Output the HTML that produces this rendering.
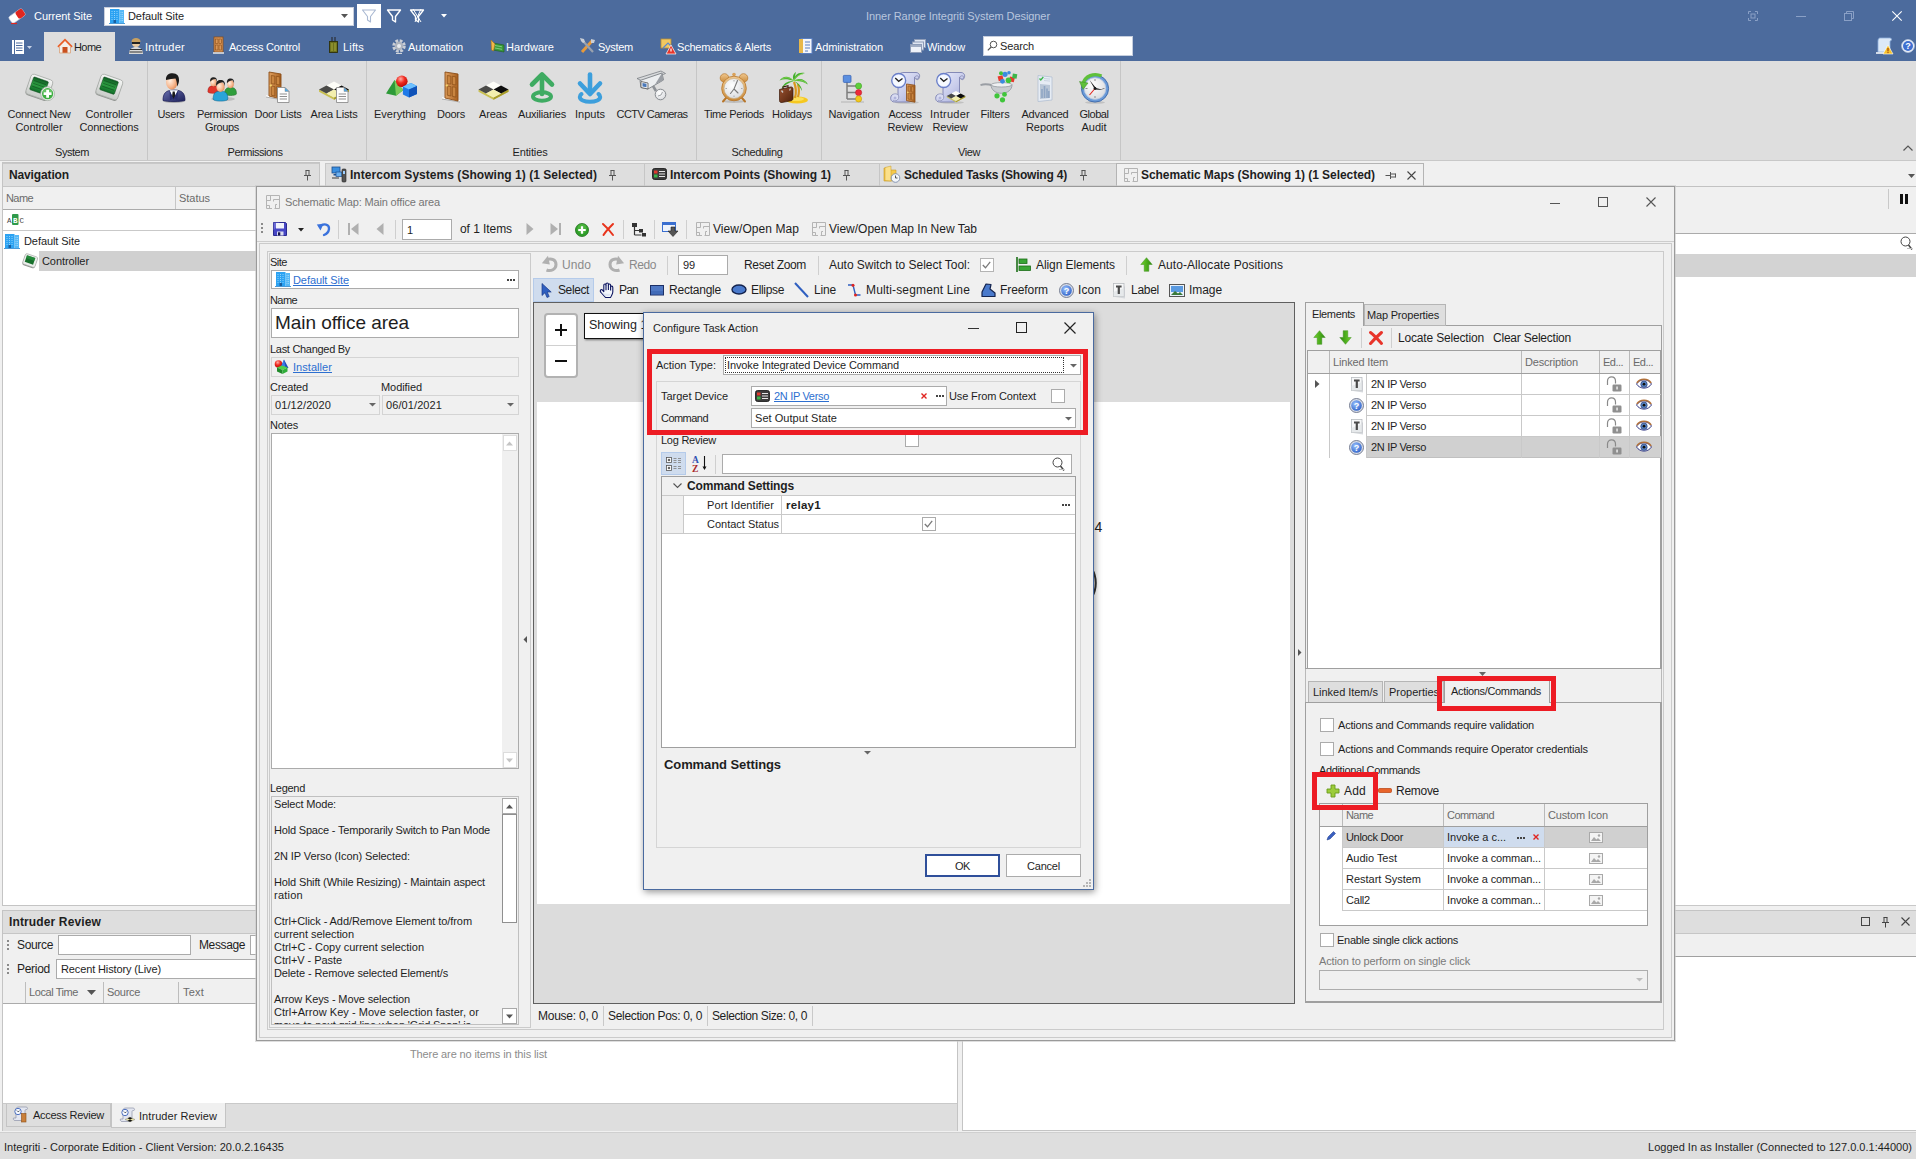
<!DOCTYPE html>
<html lang="en"><head><meta charset="utf-8"><title>Inner Range Integriti System Designer</title>
<style>
html,body{margin:0;padding:0;background:#f0f0f0;}
#app{position:relative;width:1916px;height:1159px;overflow:hidden;background:#f0f0f0;font-family:"Liberation Sans",sans-serif;font-size:11px;color:#1e1e1e;}
#app div,#app svg{position:absolute;box-sizing:border-box;}
#app svg{overflow:visible;}
.t,.s,.b,.bs,.h,.big{white-space:pre;line-height:14px;height:14px;}
.t{font-size:11px;}
.s{font-size:12px;line-height:17px;height:17px;}
.b{font-size:12px;font-weight:bold;}
.bs{font-size:13px;font-weight:bold;line-height:16px;height:16px;}
.h{font-size:11px;color:#6b6b6b;}
.big{font-size:19px;line-height:24px;height:24px;}
.lnk span{color:#2d6fd0;text-decoration:underline;}
.w{color:#fff;}

</style></head>
<body>
<div id="app">
<svg width="0" height="0" style="left:0;top:0"><defs>
<linearGradient id="gGreen" x1="0" y1="0" x2="0" y2="1"><stop offset="0" stop-color="#0e5a22"/><stop offset=".5" stop-color="#2fa044"/><stop offset="1" stop-color="#0e6a26"/></linearGradient>
<linearGradient id="gDoor" x1="0" y1="0" x2="1" y2="0"><stop offset="0" stop-color="#dfa060"/><stop offset="1" stop-color="#a8601f"/></linearGradient>
<linearGradient id="gSuit" x1="0" y1="0" x2="1" y2="1"><stop offset="0" stop-color="#6a70b0"/><stop offset="1" stop-color="#1d2059"/></linearGradient>
<radialGradient id="gSkin" cx="0.35" cy="0.4" r="0.75"><stop offset="0" stop-color="#fff0e2"/><stop offset=".6" stop-color="#f6b58c"/><stop offset="1" stop-color="#d9804a"/></radialGradient>
<radialGradient id="gBlueBall" cx="0.4" cy="0.35" r="0.7"><stop offset="0" stop-color="#9cc4ff"/><stop offset="1" stop-color="#2f62c8"/></radialGradient>
<radialGradient id="gRedBall" cx="0.4" cy="0.3" r="0.7"><stop offset="0" stop-color="#ffb0a8"/><stop offset=".5" stop-color="#f02a20"/><stop offset="1" stop-color="#b80c08"/></radialGradient>
<linearGradient id="gArrowG" x1="0" y1="0" x2="1" y2="0"><stop offset="0" stop-color="#6fd22a"/><stop offset="1" stop-color="#2c8a10"/></linearGradient>
<linearGradient id="gDev" x1="0" y1="0" x2="0" y2="1"><stop offset="0" stop-color="#f4f5f4"/><stop offset="1" stop-color="#c9ccc9"/></linearGradient>
<linearGradient id="gScroll" x1="0" y1="0" x2="1" y2="1"><stop offset="0" stop-color="#eef0fb"/><stop offset=".55" stop-color="#c9cdec"/><stop offset="1" stop-color="#a4a9d8"/></linearGradient>
<linearGradient id="gBell" x1="0" y1="0" x2="0" y2="1"><stop offset="0" stop-color="#f0c890"/><stop offset="1" stop-color="#c98a3a"/></linearGradient>
<radialGradient id="gFace" cx="0.4" cy="0.35" r="0.8"><stop offset="0" stop-color="#ffffff"/><stop offset="1" stop-color="#d4d6da"/></radialGradient>
<linearGradient id="gCase" x1="0" y1="0" x2="1" y2="1"><stop offset="0" stop-color="#9a5230"/><stop offset="1" stop-color="#4f210c"/></linearGradient>
</defs></svg>
<div style="left:0px;top:0px;width:1916px;height:61px;background:#4c6b9d;"></div>
<svg style="left:8px;top:7px;" width="18" height="18" viewBox="0 0 18 18"><g transform="rotate(-35 9 9)"><rect x="1" y="5" width="16" height="8" rx="2" fill="#fff" stroke="#c9cfe0" stroke-width=".6"/><rect x="9" y="5" width="8" height="8" rx="2" fill="#e0261f"/></g><path d="M3 16.500h6" stroke="#e0261f" stroke-width="1.200"/></svg>
<div class="t w" style="left:34px;top:9px;letter-spacing:-0.058px;"><span>Current Site</span></div>
<div style="left:104px;top:7px;width:250px;height:19px;background:#fff;border:1px solid #c9cfdc;"></div>
<svg style="left:109px;top:8px;" width="16" height="16" viewBox="0 0 16 16"><rect x="1" y="1" width="9.500" height="14" fill="#2ba2f2"/><rect x="10.500" y="2" width="4.500" height="13" fill="#55b8f6"/><path d="M3 3v9M5.500 3v9M8 3v9M12 4v10M13.500 4v10" stroke="#8fd2fb" stroke-width="1" stroke-dasharray="1 1"/><rect x="4.500" y="12" width="2.500" height="3" fill="#1a5fa0"/><path d="M0 15.500h16" stroke="#4a9ad8" stroke-width="1"/></svg>
<div class="t" style="left:128px;top:9px;letter-spacing:-0.073px;"><span>Default Site</span></div>
<svg style="left:341px;top:14px;" width="8" height="5" viewBox="0 0 8 5"><path d="M0 0h7L3.500 4z" fill="#555"/></svg>
<div style="left:357px;top:4px;width:24px;height:24px;background:#fff;"></div>
<svg style="left:361px;top:8px;" width="16" height="16" viewBox="0 0 16 16"><path d="M1.500 2h13L9.500 8.500V14l-3-2V8.500z" fill="none" stroke="#a9b8d2" stroke-width="1.1" stroke-linejoin="round"/></svg>
<svg style="left:386px;top:8px;" width="16" height="16" viewBox="0 0 16 16"><path d="M1.500 2h13L9.500 8.500V14l-3-2V8.500z" fill="none" stroke="#fff" stroke-width="1.4" stroke-linejoin="round"/></svg>
<svg style="left:409px;top:8px;" width="16" height="16" viewBox="0 0 16 16"><path d="M1.500 2h13L9.500 8.500V14l-3-2V8.500z" fill="none" stroke="#fff" stroke-width="1.3" stroke-linejoin="round"/><path d="M4 1l8 13M12 1L6 14" stroke="#fff" stroke-width="1"/></svg>
<svg style="left:441px;top:14px;" width="8" height="5" viewBox="0 0 8 5"><path d="M0 0h6L3 3.500z" fill="#fff"/></svg>
<div class="t" style="left:866px;top:9px;color:#b9c6de;letter-spacing:-0.067px;"><span>Inner Range Integriti System Designer</span></div>
<svg style="left:1748px;top:11px;" width="10" height="10" viewBox="0 0 10 10"><path d="M.5 3V.5H3M7 .5h2.500V3M9.500 7v2.500H7M3 9.500H.5V7" fill="none" stroke="#8aa0c6" stroke-width="1"/><rect x="3" y="3" width="4" height="4" fill="none" stroke="#8aa0c6" stroke-width="1"/></svg>
<div style="left:1796px;top:16px;width:10px;height:1px;background:#8aa0c6;"></div>
<svg style="left:1844px;top:11px;" width="10" height="10" viewBox="0 0 10 10"><rect x=".5" y="2.500" width="7" height="7" fill="none" stroke="#8aa0c6" stroke-width="1"/><path d="M2.500 2.500v-2h7v7h-2" fill="none" stroke="#8aa0c6" stroke-width="1"/></svg>
<svg style="left:1892px;top:11px;" width="10" height="10" viewBox="0 0 10 10"><path d="M.3.300l9.400 9.400M9.700.3L.3 9.700" stroke="#fff" stroke-width="1.100"/></svg>
<svg style="left:12px;top:40px;" width="14" height="14" viewBox="0 0 14 14"><rect x="0" y="0" width="12" height="14" fill="#fff"/><path d="M4 3h6.500M4 5.500h6.500M4 8h6.500M4 10.500h6.500" stroke="#4c6b9d" stroke-width="1"/><path d="M2.500 0v14" stroke="#4c6b9d" stroke-width="1"/></svg>
<svg style="left:27px;top:46px;" width="6" height="4" viewBox="0 0 6 4"><path d="M0 0h5L2.500 3z" fill="#c9d3e6"/></svg>
<div style="left:44px;top:32px;width:71px;height:29px;background:#dedede;"></div>
<svg style="left:57px;top:38px;" width="16" height="16" viewBox="0 0 16 16"><path d="M8 1L0 8.500h2.500V15h11V8.500H16z" fill="#f4f0ea" stroke="#e2622a" stroke-width="0"/><path d="M8 .5L.3 8.200l1.200 1.200L8 3l6.500 6.400 1.200-1.200z" fill="#e8602a"/><rect x="5.500" y="9" width="5" height="6" fill="#c9501f"/><path d="M2.500 9v6h11V9" fill="none" stroke="#d9a27a" stroke-width=".8"/></svg>
<div class="t" style="left:74px;top:40px;letter-spacing:-0.586px;"><span>Home</span></div>
<div class="t w" style="left:145px;top:40px;letter-spacing:0.260px;"><span>Intruder</span></div>
<div class="t w" style="left:229px;top:40px;letter-spacing:-0.213px;"><span>Access Control</span></div>
<div class="t w" style="left:343px;top:40px;letter-spacing:0.163px;"><span>Lifts</span></div>
<div class="t w" style="left:408px;top:40px;letter-spacing:-0.066px;"><span>Automation</span></div>
<div class="t w" style="left:506px;top:40px;letter-spacing:0.039px;"><span>Hardware</span></div>
<div class="t w" style="left:598px;top:40px;letter-spacing:-0.281px;"><span>System</span></div>
<div class="t w" style="left:677px;top:40px;letter-spacing:-0.201px;"><span>Schematics &amp; Alerts</span></div>
<div class="t w" style="left:815px;top:40px;letter-spacing:-0.122px;"><span>Administration</span></div>
<div class="t w" style="left:927px;top:40px;letter-spacing:-0.188px;"><span>Window</span></div>
<svg style="left:129px;top:38px;" width="14" height="16" viewBox="0 0 14 16"><circle cx="7" cy="5" r="4" fill="#e8c9a0"/><path d="M2.500 4c0-3 2-4 4.500-4s4.500 1 4.500 4z" fill="#c8a060"/><rect x="3" y="4" width="8" height="2" fill="#222"/><path d="M0 16c0-5 3-7 7-7s7 2 7 7z" fill="#d8d8d8"/><path d="M1 11.500h12M.5 14h13" stroke="#333" stroke-width="1.200"/></svg>
<svg style="left:213px;top:37px;" width="11" height="17" viewBox="0 0 11 17"><rect x="1" y="0" width="9" height="15" fill="#d9975a" stroke="#8a4d17" stroke-width=".8"/><rect x="2.500" y="2" width="2.500" height="4.500" fill="none" stroke="#8a4d17" stroke-width=".6"/><rect x="6" y="2" width="2.500" height="4.500" fill="none" stroke="#8a4d17" stroke-width=".6"/><rect x="2.500" y="8" width="2.500" height="5" fill="none" stroke="#8a4d17" stroke-width=".6"/><rect x="6" y="8" width="2.500" height="5" fill="none" stroke="#8a4d17" stroke-width=".6"/><path d="M0 16h11" stroke="#e8e8e8" stroke-width="1.500"/></svg>
<svg style="left:328px;top:37px;" width="11" height="17" viewBox="0 0 11 17"><path d="M4 0v4M7 0v4" stroke="#222" stroke-width="1"/><rect x="1.500" y="4.500" width="8" height="11" fill="#6a6e1c" stroke="#2e300a" stroke-width=".9"/><rect x="2.800" y="6" width="2.300" height="8" fill="#8a8e2c"/><rect x="6" y="6" width="2.300" height="8" fill="#8a8e2c"/></svg>
<svg style="left:391px;top:38px;" width="16" height="16" viewBox="0 0 16 16"><circle cx="8" cy="8" r="5" fill="none" stroke="#c9ced6" stroke-width="3.500" stroke-dasharray="2.600 1.330"/><circle cx="8" cy="8" r="4.200" fill="#aeb4be"/><circle cx="8" cy="8" r="2" fill="#e8ebf0"/><path d="M5 15.500h6" stroke="#d0d4da" stroke-width="1"/></svg>
<svg style="left:490px;top:38px;" width="16" height="16" viewBox="0 0 16 16"><path d="M3 5l11 2v7l-11-2z" fill="#3a9a3a" stroke="#1c5c1c" stroke-width=".6"/><path d="M1 2l4 4-1.500 7-2-1z" fill="#f2b84a" stroke="#a8741a" stroke-width=".6"/><path d="M5 7.500l7 1.300M5 10l7 1.300" stroke="#8fd88f" stroke-width=".8"/></svg>
<svg style="left:580px;top:38px;" width="16" height="16" viewBox="0 0 16 16"><path d="M2 14L12 3" stroke="#e89a3a" stroke-width="3"/><path d="M11 1l4 1-1 3-3 0z" fill="#c9ced6"/><path d="M2 2l11 12" stroke="#9aa2ae" stroke-width="2.200"/><path d="M0 0l4 1 1 3-2 1-2-2z" fill="#c9ced6"/></svg>
<svg style="left:660px;top:38px;" width="16" height="16" viewBox="0 0 16 16"><rect x="1" y="1" width="10" height="9" fill="#f2c860" stroke="#b8903a" stroke-width=".8"/><path d="M3 10l5-5 3 3" stroke="#5a88d0" stroke-width="1.200" fill="none"/><path d="M11 7l5 9H6z" fill="#e8352a" stroke="#fff" stroke-width=".7"/><path d="M11 10.500v3" stroke="#fff" stroke-width="1.200"/></svg>
<svg style="left:799px;top:38px;" width="14" height="16" viewBox="0 0 14 16"><rect x="2" y=".5" width="11" height="15" fill="#f4f6fa" stroke="#5a7fc0" stroke-width="1"/><rect x="0" y="1" width="4" height="14" fill="#e8b84a"/><path d="M6 4h5M6 7h5M6 10h5M6 13h3" stroke="#5a7fc0" stroke-width="1.200"/></svg>
<svg style="left:910px;top:38px;" width="16" height="16" viewBox="0 0 16 16"><rect x="4.500" y="1.500" width="11" height="8" fill="#dfe6f2" stroke="#8d9cb8" stroke-width="1"/><rect x="2.500" y="4" width="11" height="8" fill="#dfe6f2" stroke="#8d9cb8" stroke-width="1"/><rect x=".5" y="6.500" width="11" height="8" fill="#eef2f9" stroke="#8d9cb8" stroke-width="1"/><path d="M.5 8h11" stroke="#8d9cb8" stroke-width="1.600"/></svg>
<div style="left:983px;top:36px;width:150px;height:20px;background:#fff;border:1px solid #c5cede;"></div>
<svg style="left:987px;top:40px;" width="11" height="11" viewBox="0 0 11 11"><circle cx="6.500" cy="4.500" r="3.300" fill="none" stroke="#555" stroke-width="1"/><path d="M4.200 7L.8 10.400" stroke="#555" stroke-width="1.200"/></svg>
<div class="t" style="left:1000px;top:39px;letter-spacing:-0.143px;"><span>Search</span></div>
<svg style="left:1876px;top:36px;" width="18" height="20" viewBox="0 0 18 20"><path d="M4 2h10c2 0 2 3 0 3v11H2V5c0-2 1-3 2-3z" fill="#dce9f8" stroke="#8fb0dc" stroke-width=".8"/><path d="M0 17h10" stroke="#fff" stroke-width="1.500"/><path d="M12 9l5 9H7z" fill="#f6c12a" stroke="#fff" stroke-width=".6"/><path d="M12 12v3.200" stroke="#a84a10" stroke-width="1.300"/><circle cx="12" cy="16.500" r=".7" fill="#a84a10"/></svg>
<svg style="left:1901px;top:39px;" width="14" height="14" viewBox="0 0 14 14"><circle cx="7" cy="7" r="6.400" fill="#f0f4fb" stroke="#b9c6de" stroke-width=".8"/><circle cx="7" cy="7" r="5" fill="#3f6fd0"/><text x="7" y="10.200" font-family="Liberation Sans,sans-serif" font-size="9" font-weight="bold" fill="#fff" text-anchor="middle">?</text></svg>
<div style="left:0px;top:61px;width:1916px;height:100px;background:#dedede;"></div>
<div style="left:0px;top:160px;width:1916px;height:1px;background:#c8c8c8;"></div>
<div style="left:147px;top:61px;width:1px;height:99px;background:#c6c6c6;"></div>
<div style="left:366px;top:61px;width:1px;height:99px;background:#c6c6c6;"></div>
<div style="left:696px;top:61px;width:1px;height:99px;background:#c6c6c6;"></div>
<div style="left:821px;top:61px;width:1px;height:99px;background:#c6c6c6;"></div>
<div style="left:1120px;top:61px;width:1px;height:99px;background:#c6c6c6;"></div>
<svg style="left:23px;top:72px;" width="32" height="32" viewBox="0 0 32 32"><g transform="rotate(19 16 16)"><rect x="4.500" y="5.500" width="23" height="21" rx="3" fill="#8e918e"/><rect x="4.500" y="4.500" width="23" height="21" rx="3" fill="url(#gDev)" stroke="#a9aca9" stroke-width=".8"/>
<rect x="7.500" y="7" width="15.500" height="13.500" rx="1" fill="url(#gGreen)" stroke="#0b4a1a" stroke-width=".5"/>
<path d="M9 10.500h12.500M9 13.500h12.500M9 16.500h12.500" stroke="#0a4518" stroke-width=".7" opacity=".7"/></g><circle cx="24.600" cy="21.700" r="6.900" fill="#eef2ee" stroke="#a5ada5" stroke-width=".8"/><circle cx="24.600" cy="21.700" r="5.600" fill="#3fae42"/><path d="M19.500 20a5.600 5.600 0 0 1 10.200 0z" fill="#7dd27c" opacity=".6"/>
<path d="M24.600 17.700v8M20.600 21.700h8" stroke="#fff" stroke-width="2.800"/></svg>
<div class="t" style="left:-21px;top:107px;width:120px;text-align:center;letter-spacing:-0.277px;"><span>Connect New</span></div>
<div class="t" style="left:-21px;top:120px;width:120px;text-align:center;letter-spacing:-0.069px;"><span>Controller</span></div>
<svg style="left:93px;top:72px;" width="32" height="32" viewBox="0 0 32 32"><g transform="rotate(19 16 16)"><rect x="4.500" y="5.500" width="23" height="21" rx="3" fill="#8e918e"/><rect x="4.500" y="4.500" width="23" height="21" rx="3" fill="url(#gDev)" stroke="#a9aca9" stroke-width=".8"/>
<rect x="7.500" y="7" width="15.500" height="13.500" rx="1" fill="url(#gGreen)" stroke="#0b4a1a" stroke-width=".5"/>
<path d="M9 10.500h12.500M9 13.500h12.500M9 16.500h12.500" stroke="#0a4518" stroke-width=".7" opacity=".7"/></g></svg>
<div class="t" style="left:49px;top:107px;width:120px;text-align:center;letter-spacing:-0.069px;"><span>Controller</span></div>
<div class="t" style="left:49px;top:120px;width:120px;text-align:center;letter-spacing:-0.196px;"><span>Connections</span></div>
<svg style="left:155px;top:72px;" width="32" height="32" viewBox="0 0 32 32"><ellipse cx="19" cy="29" rx="11" ry="2" fill="#000" opacity=".18"/>
<path d="M8 28.500c0-7 2.500-10.500 11-10.500s11 3.500 11 10.500c-5 1.500-17 1.500-22 0z" fill="url(#gSuit)" stroke="#141650" stroke-width=".7"/>
<path d="M14.500 18.200l4 8.500 4.500-8.500z" fill="#fff"/><path d="M17.700 19.500h2l.8 5.500-1.800 2.500-1.800-2.500z" fill="#1a1a1a"/>
<path d="M14.500 18.200l4 8.500-3.500 1.500zM23 18.200l-4.500 8.500 4 1.500z" fill="#2a2e70"/>
<ellipse cx="16.800" cy="10" rx="5.800" ry="7.600" fill="url(#gSkin)"/>
<path d="M11 8c-.5-5 3-6.800 6.500-6.800 4.600 0 7 2.800 6.500 7.800-.3 2.500-1.200 4.500-2 5.500.3-3-.5-6-1.500-8-2.500.5-6 .5-9.500 1.500z" fill="#1c1c1c"/></svg>
<div class="t" style="left:111px;top:107px;width:120px;text-align:center;letter-spacing:-0.347px;"><span>Users</span></div>
<svg style="left:206px;top:72px;" width="32" height="32" viewBox="0 0 32 32"><ellipse cx="17" cy="27" rx="12" ry="2" fill="#000" opacity=".15"/><g transform="translate(7.5 11) scale(0.8)"><path d="M-7 11c0-5.500 2-7.500 7-7.500s7 2 7 7.500c0 2.600-14 2.600-14 0z" fill="#e0362c" stroke="#9a1a14" stroke-width=".6"/>
<ellipse cx="0" cy="-.5" rx="3.900" ry="4.800" fill="url(#gSkin)"/><path d="M-4.100 -1.500c-.5-4.200 1.600-5.600 4.100-5.600 3 0 4.700 1.800 4.200 5.800-.5-1.800-1.200-3-1.800-3.600-1.800.3-4.500.6-6.500 3.400z" fill="#222"/></g><g transform="translate(24.5 12.5) scale(0.85)"><path d="M-7 11c0-5.500 2-7.500 7-7.500s7 2 7 7.500c0 2.600-14 2.600-14 0z" fill="#2f9e3c" stroke="#1a6a24" stroke-width=".6"/>
<ellipse cx="0" cy="-.5" rx="3.900" ry="4.800" fill="url(#gSkin)"/><path d="M-4.100 -1.500c-.5-4.200 1.600-5.600 4.100-5.600 3 0 4.700 1.800 4.200 5.800-.5-1.800-1.200-3-1.800-3.600-1.800.3-4.500.6-6.500 3.400z" fill="#222"/></g><g transform="translate(14.5 15.5) scale(1.05)"><path d="M-7 11c0-5.500 2-7.500 7-7.500s7 2 7 7.500c0 2.600-14 2.600-14 0z" fill="#2aa4d8" stroke="#14709a" stroke-width=".6"/>
<ellipse cx="0" cy="-.5" rx="3.900" ry="4.800" fill="url(#gSkin)"/><path d="M-4.100 -1.500c-.5-4.200 1.600-5.600 4.100-5.600 3 0 4.700 1.800 4.200 5.800-.5-1.800-1.200-3-1.800-3.600-1.800.3-4.500.6-6.500 3.400z" fill="#222"/></g></svg>
<div class="t" style="left:162px;top:107px;width:120px;text-align:center;letter-spacing:-0.441px;"><span>Permission</span></div>
<div class="t" style="left:162px;top:120px;width:120px;text-align:center;letter-spacing:-0.346px;"><span>Groups</span></div>
<svg style="left:262px;top:72px;" width="32" height="32" viewBox="0 0 32 32"><path d="M4 24l17 3" stroke="#fff" stroke-width="1.600"/><path d="M4 25l17 3" stroke="#8a8a8a" stroke-width=".6"/>
<path d="M7 0l12 2v25l-12-3z" fill="url(#gDoor)" stroke="#8a4d17" stroke-width=".9"/>
<path d="M9.3 3.5l3.500 .6v8l-3.500-.4zM14.3 4.3l3.500 .6v8l-3.500-.4zM9.3 14l3.500 .5v9.500l-3.500-.8zM14.3 14.8l3.500 .5v9.800l-3.500-.8z" fill="#c98540" stroke="#8a4d17" stroke-width=".7"/>
<circle cx="8.8" cy="13.5" r="1.100" fill="#f6d66a"/><path d="M15.5 15.5h7.500l4 4v11H15.5z" fill="#fdfdfd" stroke="#8f8f8f" stroke-width=".9"/><path d="M23.0 15.5v4h4z" fill="#4aa8e8" stroke="#8f8f8f" stroke-width=".5"/>
<path d="M17.7 22.0h7.300M17.7 24.5h7.300M17.7 27.0h7.300" stroke="#8f8f8f" stroke-width="1"/></svg>
<div class="t" style="left:218px;top:107px;width:120px;text-align:center;letter-spacing:-0.253px;"><span>Door Lists</span></div>
<svg style="left:318px;top:72px;" width="32" height="32" viewBox="0 0 32 32"><g transform="translate(16 17.5) scale(1.0)"><path d="M-15 0v2.200L0 10.200l15-8V0L0 8z" fill="#c9c052"/><path d="M0 8v2.200l15-8V0z" fill="#a89c2a"/>
<path d="M-7.500-4L0-8 7.500-4 0 0z" fill="#fdfdf8"/><path d="M0 0l7.500-4L15 0 7.500 4z" fill="#0c0c0c"/><path d="M-15 0l7.500-4L0 0l-7.500 4z" fill="#4a4a48"/><path d="M-7.500 4L0 0l7.500 4L0 8z" fill="#f3efae"/></g><path d="M18.5 15.5h7.500l4 4v11H18.5z" fill="#fdfdfd" stroke="#8f8f8f" stroke-width=".9"/><path d="M26.0 15.5v4h4z" fill="#4aa8e8" stroke="#8f8f8f" stroke-width=".5"/>
<path d="M20.7 22.0h7.300M20.7 24.5h7.300M20.7 27.0h7.300" stroke="#8f8f8f" stroke-width="1"/></svg>
<div class="t" style="left:274px;top:107px;width:120px;text-align:center;letter-spacing:-0.192px;"><span>Area Lists</span></div>
<svg style="left:384px;top:72px;" width="32" height="32" viewBox="0 0 32 32"><path d="M2 21.500L10.500 8l9 10-7.500 5.700z" fill="#2d9a38"/><path d="M10.500 8l9 10-7.500 5.700z" fill="#7acb5a"/>
<circle cx="17.800" cy="9.300" r="5.800" fill="url(#gRedBall)"/>
<path d="M18.900 14.500L27 11l6 3v8l-8 3.500-6.100-3z" fill="#1f7ae8"/><path d="M18.900 14.500L27 11l6 3-8 3.500z" fill="#6cc0ff"/><path d="M25 17.500v8l8-3.500v-8z" fill="#0f52b8"/></svg>
<div class="t" style="left:340px;top:107px;width:120px;text-align:center;letter-spacing:0.002px;"><span>Everything</span></div>
<svg style="left:435px;top:72px;" width="32" height="32" viewBox="0 0 32 32"><path d="M7 26l18 3" stroke="#fff" stroke-width="1.600"/><path d="M7 27l18 3" stroke="#8a8a8a" stroke-width=".6"/>
<path d="M10 0l13 2v27l-13-3z" fill="url(#gDoor)" stroke="#8a4d17" stroke-width=".9"/>
<path d="M12.3 3.5l3.500 .6v8l-3.500-.4zM17.3 4.3l3.500 .6v8l-3.500-.4zM12.3 14l3.500 .5v9.500l-3.500-.8zM17.3 14.8l3.500 .5v9.800l-3.500-.8z" fill="#c98540" stroke="#8a4d17" stroke-width=".7"/>
<circle cx="11.8" cy="13.5" r="1.100" fill="#f6d66a"/></svg>
<div class="t" style="left:391px;top:107px;width:120px;text-align:center;letter-spacing:-0.269px;"><span>Doors</span></div>
<svg style="left:477px;top:72px;" width="32" height="32" viewBox="0 0 32 32"><g transform="translate(16.5 17.5) scale(1.0)"><path d="M-15 0v2.200L0 10.200l15-8V0L0 8z" fill="#c9c052"/><path d="M0 8v2.200l15-8V0z" fill="#a89c2a"/>
<path d="M-7.500-4L0-8 7.500-4 0 0z" fill="#fdfdf8"/><path d="M0 0l7.500-4L15 0 7.500 4z" fill="#0c0c0c"/><path d="M-15 0l7.500-4L0 0l-7.500 4z" fill="#4a4a48"/><path d="M-7.500 4L0 0l7.500 4L0 8z" fill="#f3efae"/></g></svg>
<div class="t" style="left:433px;top:107px;width:120px;text-align:center;letter-spacing:-0.150px;"><span>Areas</span></div>
<svg style="left:526px;top:72px;" width="32" height="32" viewBox="0 0 32 32"><ellipse cx="16" cy="24.500" rx="9" ry="4.300" fill="none" stroke="#3fab62" stroke-width="4"/>
<path d="M16 3.500V22" stroke="#3fab62" stroke-width="4.600" stroke-linecap="round"/><path d="M6 12.500L16 2.500l10 10" fill="none" stroke="#3fab62" stroke-width="4.600" stroke-linecap="round" stroke-linejoin="round"/></svg>
<div class="t" style="left:482px;top:107px;width:120px;text-align:center;letter-spacing:-0.194px;"><span>Auxiliaries</span></div>
<svg style="left:574px;top:72px;" width="32" height="32" viewBox="0 0 32 32"><path d="M7.500 22C6 23 5.800 24 5.800 25c0 2.800 4.500 4.800 10.200 4.800S26.200 27.800 26.200 25c0-1-.3-2-1.700-3" fill="none" stroke="#3d9fdc" stroke-width="4" stroke-linecap="round"/>
<path d="M16 2.500V20" stroke="#3d9fdc" stroke-width="4.600" stroke-linecap="round"/><path d="M6 11.500L16 22l10-10.500" fill="none" stroke="#3d9fdc" stroke-width="4.600" stroke-linecap="round" stroke-linejoin="round"/></svg>
<div class="t" style="left:530px;top:107px;width:120px;text-align:center;letter-spacing:0.005px;"><span>Inputs</span></div>
<svg style="left:636px;top:72px;" width="32" height="32" viewBox="0 0 32 32"><path d="M1 6.500L25 -1l4.500 2.500L8 10z" fill="#d8dadc" stroke="#6f7378" stroke-width=".7"/>
<path d="M4 8.500l22-7.500 1.500 7L12 17l-7-1.500z" fill="#eceef0" stroke="#6f7378" stroke-width=".8"/><path d="M26 1l1.500 7L19 12.500z" fill="#9a9ea4"/>
<path d="M5 9.500l7 1.500v6l-7-1.500z" fill="#f4f5f6" stroke="#555" stroke-width=".8"/><path d="M6.500 11l4 .8v3.500l-4-.8z" fill="#4a78b8"/>
<path d="M17 14l3 5" stroke="#8d9196" stroke-width="2.600"/><circle cx="24.500" cy="22.500" r="5.300" fill="url(#gFace)" stroke="#7d8186" stroke-width=".9"/><path d="M22 24l3-1 1.500-3" stroke="#8d9196" stroke-width=".8" fill="none"/></svg>
<div class="t" style="left:592px;top:107px;width:120px;text-align:center;letter-spacing:-0.552px;"><span>CCTV Cameras</span></div>
<svg style="left:718px;top:72px;" width="32" height="32" viewBox="0 0 32 32"><ellipse cx="16" cy="29.500" rx="11" ry="1.500" fill="#000" opacity=".15"/><circle cx="6.500" cy="6" r="4.300" fill="url(#gBell)" stroke="#b8762a" stroke-width=".7"/><circle cx="25.500" cy="6" r="4.300" fill="url(#gBell)" stroke="#b8762a" stroke-width=".7"/><circle cx="16" cy="2.500" r="1.800" fill="#d9a15a"/>
<path d="M8 26l-3 3.500M24 26l3 3.500" stroke="#b8762a" stroke-width="2" stroke-linecap="round"/>
<circle cx="16" cy="16.500" r="12.300" fill="url(#gBell)" stroke="#b8762a" stroke-width=".8"/><circle cx="16" cy="16.500" r="10" fill="url(#gFace)" stroke="#c9b088" stroke-width=".7"/>
<path d="M16 8v1.500M16 23.500V25M7.500 16.500H9M23 16.500h1.500" stroke="#9a9a9a" stroke-width=".8"/><path d="M19.500 8.500L16 17l4 4M16 17l-3.500 4.500" stroke="#7a7a7a" stroke-width="1.100" fill="none" stroke-linecap="round"/></svg>
<div class="t" style="left:674px;top:107px;width:120px;text-align:center;letter-spacing:-0.366px;"><span>Time Periods</span></div>
<svg style="left:776px;top:72px;" width="32" height="32" viewBox="0 0 32 32"><ellipse cx="21" cy="28" rx="11" ry="3.600" fill="#f6c820"/><ellipse cx="20" cy="27" rx="8" ry="2" fill="#fbe05a"/>
<path d="M19 26c1.500-6 1-11-1-16M22 25c1.500-5 1-9 0-13" stroke="#d9981e" stroke-width="2.200" fill="none"/>
<path d="M18 9C13 3 7 3.500 3.500 8.500c4-2 8.500-1.500 14.500.5zM18 9C18 3 22.500-.5 29 1c-5 1-8 3.500-11 8zM18 9c5-3.500 11-2 14 3.500-4.500-3-9-4-14-3.500zM18 9C12 8.500 7 11.500 5.500 17c3.500-4.500 7.500-6.500 12.500-8zM18 9c4 1.500 8 5.500 8 10-2-4-4.500-7.500-8-10zM18 9c-2-4-1-7 2-9-1 3-1 6-2 9z" fill="#45b02c"/>
<path d="M18 9C14 5 9 5 6 7M18 9c1-4 5-6.500 9-7M18 9c4-2 9-1 12 2" stroke="#8fdc5a" stroke-width=".8" fill="none"/>
<path d="M3.500 17.500l11-2.500c1.500-.3 2.500.5 2.500 2v9.500c0 1.200-.8 2-2 2.300l-9 1.700c-1.500.2-2.500-.5-2.500-2z" fill="url(#gCase)" stroke="#3a1808" stroke-width=".7"/>
<path d="M7 17v-2l5-1.200v2" fill="none" stroke="#3a1808" stroke-width="1.100"/><path d="M5.500 18.500l1.500 2M14.500 16.500l-1 2" stroke="#c9c9c9" stroke-width="1.300"/></svg>
<div class="t" style="left:732px;top:107px;width:120px;text-align:center;letter-spacing:-0.275px;"><span>Holidays</span></div>
<svg style="left:838px;top:72px;" width="32" height="32" viewBox="0 0 32 32"><path d="M3 30h23" stroke="#b4b4b4" stroke-width="1"/>
<path d="M9 10v17M9 14h9M9 20.600h9M9 27h9" stroke="#7d7d7d" stroke-width="1.500" fill="none"/>
<rect x="5.300" y="3.400" width="7.700" height="7" rx=".8" fill="#5b8fe0" stroke="#3a66b8" stroke-width=".8"/>
<circle cx="20.600" cy="14" r="3.100" fill="#5fcf3a" stroke="#3a9a22" stroke-width=".5"/><circle cx="20.600" cy="20.600" r="3.100" fill="#ee2a3a" stroke="#b01624" stroke-width=".5"/><circle cx="20.600" cy="26.900" r="3.100" fill="#f2c81c" stroke="#b8940c" stroke-width=".5"/></svg>
<div class="t" style="left:794px;top:107px;width:120px;text-align:center;letter-spacing:-0.098px;"><span>Navigation</span></div>
<svg style="left:889px;top:72px;" width="32" height="32" viewBox="0 0 32 32"><ellipse cx="18" cy="30.500" rx="12" ry="1.300" fill="#000" opacity=".13"/>
<path d="M9 5c0-3 3-4.500 6-4.500h12c4 0 5 5 1.500 6.500-1.500.3-3-.3-3-2v17c0 5-2 8-7 8H5.500c-4 0-5-4.500-2.500-7l6 .5z" fill="url(#gScroll)" stroke="#7a80b0" stroke-width=".9"/>
<path d="M3 23c3-2.500 8-1 6.500 3.500-1 2.500-4 3-5.500 1.500" fill="#d9dcf2" stroke="#8c90b8" stroke-width=".8"/><circle cx="6" cy="26" r="1.500" fill="#b0b4dc"/>
<path d="M25.500 6.500c0-3.500 4.500-3.500 4.500-.5 0 1.800-2 2.200-2.800 1" fill="none" stroke="#8c90b8" stroke-width=".9"/>
<circle cx="9.700" cy="8.500" r="7" fill="#e4ecff" stroke="#6a7ec8" stroke-width="1.300"/><circle cx="9.700" cy="8.500" r="5.600" fill="#f6f9ff"/><path d="M6.200 6l3.500 3.300 3.800-2.800" stroke="#222" stroke-width="1.300" fill="none"/><path d="M17.500 12l8.500 1.200v17l-8.500-1.500z" fill="url(#gDoor)" stroke="#8a4d17" stroke-width=".8"/><path d="M19 14l2.500 .4v5l-2.500-.3zM22.500 14.500l2.300 .4v5.200l-2.300-.3zM19 21l2.500 .3v6.200l-2.500-.5zM22.500 21.500l2.300 .3v6.400l-2.300-.5z" fill="#c98540" stroke="#8a4d17" stroke-width=".5"/><circle cx="18.800" cy="20.500" r=".8" fill="#f6d66a"/></svg>
<div class="t" style="left:845px;top:107px;width:120px;text-align:center;letter-spacing:-0.411px;"><span>Access</span></div>
<div class="t" style="left:845px;top:120px;width:120px;text-align:center;letter-spacing:-0.180px;"><span>Review</span></div>
<svg style="left:934px;top:72px;" width="32" height="32" viewBox="0 0 32 32"><ellipse cx="18" cy="30.500" rx="12" ry="1.300" fill="#000" opacity=".13"/>
<path d="M9 5c0-3 3-4.500 6-4.500h12c4 0 5 5 1.500 6.500-1.500.3-3-.3-3-2v17c0 5-2 8-7 8H5.500c-4 0-5-4.500-2.500-7l6 .5z" fill="url(#gScroll)" stroke="#7a80b0" stroke-width=".9"/>
<path d="M3 23c3-2.500 8-1 6.500 3.500-1 2.500-4 3-5.500 1.500" fill="#d9dcf2" stroke="#8c90b8" stroke-width=".8"/><circle cx="6" cy="26" r="1.500" fill="#b0b4dc"/>
<path d="M25.500 6.500c0-3.500 4.500-3.500 4.500-.5 0 1.800-2 2.200-2.800 1" fill="none" stroke="#8c90b8" stroke-width=".9"/>
<circle cx="9.700" cy="8.500" r="7" fill="#e4ecff" stroke="#6a7ec8" stroke-width="1.300"/><circle cx="9.700" cy="8.500" r="5.600" fill="#f6f9ff"/><path d="M6.200 6l3.500 3.300 3.800-2.800" stroke="#222" stroke-width="1.300" fill="none"/><g transform="translate(22 24) scale(0.62)"><path d="M-15 0v2.200L0 10.200l15-8V0L0 8z" fill="#c9c052"/><path d="M0 8v2.200l15-8V0z" fill="#a89c2a"/>
<path d="M-7.500-4L0-8 7.500-4 0 0z" fill="#fdfdf8"/><path d="M0 0l7.500-4L15 0 7.500 4z" fill="#0c0c0c"/><path d="M-15 0l7.500-4L0 0l-7.500 4z" fill="#4a4a48"/><path d="M-7.500 4L0 0l7.500 4L0 8z" fill="#f3efae"/></g></svg>
<div class="t" style="left:890px;top:107px;width:120px;text-align:center;letter-spacing:0.260px;"><span>Intruder</span></div>
<div class="t" style="left:890px;top:120px;width:120px;text-align:center;letter-spacing:-0.180px;"><span>Review</span></div>
<svg style="left:979px;top:72px;" width="32" height="32" viewBox="0 0 32 32"><g transform="translate(1.500,-4.200)"><path d="M0 17.300c3-1 8-.8 12 .2" stroke="#9a9ea4" stroke-width="2" fill="none"/><path d="M10.500 17h21c0 5-4.500 8.500-10.500 8.500S10.500 22 10.500 17z" fill="#c9ccd0" stroke="#8e939a" stroke-width=".8"/><ellipse cx="21" cy="17" rx="10.500" ry="2.200" fill="#eef0f2" stroke="#8e939a" stroke-width=".7"/>
<rect x="17.500" y="8" width="5" height="5" fill="#e8392e" transform="rotate(-15 20 10)"/><rect x="29" y="9" width="5" height="5" fill="#e8392e" transform="rotate(12 31 11)"/><rect x="32" y="6" width="4.500" height="4.500" fill="#3cb54a" transform="rotate(10 34 8)"/>
<circle cx="24.500" cy="6.500" r="2.600" fill="#3a8be0"/><circle cx="22" cy="13.500" r="2.400" fill="#3a8be0"/><circle cx="28" cy="12.500" r="2.800" fill="#3fc53a"/><circle cx="20.500" cy="5.500" r="2" fill="#3fc53a"/><circle cx="28.500" cy="5" r="1.800" fill="#3a8be0"/>
<circle cx="16.500" cy="28" r="2.600" fill="#3fc53a"/><circle cx="24" cy="26.600" r="2.400" fill="#3fc53a"/><circle cx="22" cy="32" r="2.600" fill="#3fc53a"/></g></svg>
<div class="t" style="left:935px;top:107px;width:120px;text-align:center;letter-spacing:-0.136px;"><span>Filters</span></div>
<svg style="left:1029px;top:72px;" width="32" height="32" viewBox="0 0 32 32"><path d="M10 4l13 1.500v22L10 30z" fill="#c9d2de" opacity=".7"/><path d="M9 3.500l14 1.500v23L9 29.500z" fill="#e6ecf4" stroke="#b4c0d2" stroke-width=".8"/>
<path d="M10.500 6.500l1.300 1.500 2.500-3" stroke="#3cb54a" stroke-width="1.300" fill="none"/><path d="M15 6.500l6 .6M15 8.500l6 .6" stroke="#c2ccda" stroke-width=".8"/>
<path d="M11 12l10 1v13l-10 1z" fill="#b9c6d6"/><path d="M13 17v9M15.500 14v12M18 16.500V26M19.800 19v7" stroke="#8fa6c4" stroke-width="1.600"/></svg>
<div class="t" style="left:985px;top:107px;width:120px;text-align:center;letter-spacing:-0.242px;"><span>Advanced</span></div>
<div class="t" style="left:985px;top:120px;width:120px;text-align:center;letter-spacing:-0.074px;"><span>Reports</span></div>
<svg style="left:1078px;top:72px;" width="32" height="32" viewBox="0 0 32 32"><ellipse cx="17" cy="30.500" rx="10" ry="1.300" fill="#000" opacity=".13"/><circle cx="17" cy="16.500" r="13.600" fill="#6a9ad8" stroke="#3a66a8" stroke-width=".9"/><circle cx="17" cy="16.500" r="10.800" fill="url(#gFace)" stroke="#b9c8e0" stroke-width=".8"/>
<path d="M17 7v2M17 24v2M7.500 16.500h2M24.500 16.500h2" stroke="#8a8a8a" stroke-width="1"/>
<path d="M5 12C7 4 16 .5 23.500 4" fill="none" stroke="#5fc03a" stroke-width="3.400"/><path d="M1.500 9.500l3.500 8 5-6.500z" fill="#5fc03a" stroke="#3a8a22" stroke-width=".5"/>
<path d="M17 16.500l-5.500 6.500" stroke="#e0241f" stroke-width="1.100"/><path d="M11.500 8l6.500 8 7.500 2-8.500-.5z" fill="#1a1a1a"/><circle cx="17" cy="16.500" r="1.400" fill="#1a1a1a"/></svg>
<div class="t" style="left:1034px;top:107px;width:120px;text-align:center;letter-spacing:-0.466px;"><span>Global</span></div>
<div class="t" style="left:1034px;top:120px;width:120px;text-align:center;letter-spacing:-0.016px;"><span>Audit</span></div>
<div class="t" style="left:12px;top:145px;width:120px;text-align:center;letter-spacing:-0.448px;"><span>System</span></div>
<div class="t" style="left:195px;top:145px;width:120px;text-align:center;letter-spacing:-0.446px;"><span>Permissions</span></div>
<div class="t" style="left:470px;top:145px;width:120px;text-align:center;letter-spacing:-0.135px;"><span>Entities</span></div>
<div class="t" style="left:697px;top:145px;width:120px;text-align:center;letter-spacing:-0.344px;"><span>Scheduling</span></div>
<div class="t" style="left:909px;top:145px;width:120px;text-align:center;letter-spacing:-0.414px;"><span>View</span></div>
<svg style="left:1903px;top:145px;" width="10" height="6" viewBox="0 0 10 6"><path d="M.5 5.500L5 1l4.500 4.500" fill="none" stroke="#555" stroke-width="1.200"/></svg>
<div style="left:2px;top:162px;width:318px;height:744px;background:#fff;border:1px solid #c4c4c4;"></div>
<div style="left:3px;top:163px;width:316px;height:23px;background:#dedede;border-top:1px solid #c8c8c8;"></div>
<div class="b" style="left:9px;top:168px;letter-spacing:-0.134px;"><span>Navigation</span></div>
<svg style="left:303px;top:170px;" width="9" height="11" viewBox="0 0 9 11"><path d="M2.500.5h4M3 .5v5M6 .5v5M1 5.500h7M4.500 5.500v5" fill="none" stroke="#555" stroke-width="1"/></svg>
<div style="left:3px;top:186px;width:254px;height:23px;background:#f0f0f0;"></div>
<div style="left:3px;top:209px;width:254px;height:1px;background:#ababab;"></div>
<div style="left:175px;top:187px;width:1px;height:22px;background:#c6c6c6;"></div>
<div style="left:3px;top:186px;width:254px;height:1px;background:#c6c6c6;"></div>
<div class="h" style="left:6px;top:191px;letter-spacing:-0.586px;"><span>Name</span></div>
<div class="h" style="left:179px;top:191px;letter-spacing:-0.031px;"><span>Status</span></div>
<div style="left:3px;top:230px;width:254px;height:1px;background:#c9c9c9;"></div>
<svg style="left:7px;top:214px;" width="17" height="11" viewBox="0 0 17 11"><text x="0" y="8.500" font-family="Liberation Mono,monospace" font-size="7.500" fill="#444">A</text><rect x="5" y="0" width="6.500" height="11" rx="1" fill="#2f9a4a"/><text x="6" y="8.500" font-family="Liberation Mono,monospace" font-size="7.500" font-weight="bold" fill="#fff">B</text><text x="12.500" y="8.500" font-family="Liberation Mono,monospace" font-size="7.500" fill="#444">C</text></svg>
<svg style="left:4px;top:233px;" width="16" height="16" viewBox="0 0 16 16"><rect x="1" y="1" width="9.500" height="14" fill="#2ba2f2"/><rect x="10.500" y="2" width="4.500" height="13" fill="#55b8f6"/><path d="M3 3v9M5.500 3v9M8 3v9M12 4v10M13.500 4v10" stroke="#8fd2fb" stroke-width="1" stroke-dasharray="1 1"/><rect x="4.500" y="12" width="2.500" height="3" fill="#1a5fa0"/><path d="M0 15.500h16" stroke="#4a9ad8" stroke-width="1"/></svg>
<div class="t" style="left:24px;top:234px;letter-spacing:-0.073px;"><span>Default Site</span></div>
<div style="left:39px;top:251px;width:218px;height:20px;background:#d0d0d0;"></div>
<svg style="left:22px;top:253px;" width="16" height="16" viewBox="0 0 16 16"><g transform="rotate(19 8 8)"><rect x="1.500" y="3" width="13" height="11" rx="1.800" fill="#8e918e"/><rect x="1.500" y="2" width="13" height="11" rx="1.800" fill="#eceeec" stroke="#a5a8a5" stroke-width=".6"/><rect x="3.300" y="3.500" width="8.800" height="7" fill="#17702c"/><rect x="3.300" y="3.500" width="8.800" height="3" fill="#2b9a44" opacity=".6"/></g></svg>
<div class="t" style="left:42px;top:254px;letter-spacing:-0.069px;"><span>Controller</span></div>
<div style="left:320px;top:186px;width:1596px;height:1px;background:#c2c2c2;"></div>
<div style="left:325px;top:163px;width:791px;height:23px;background:#dedede;border-top:1px solid #c8c8c8;border-left:1px solid #c8c8c8;"></div>
<div style="left:644px;top:164px;width:1px;height:22px;background:#c6c6c6;"></div>
<div style="left:879px;top:164px;width:1px;height:22px;background:#c6c6c6;"></div>
<div style="left:1116px;top:163px;width:308px;height:24px;background:#f0f0f0;border:1px solid #b4b4b4;border-bottom:none;"></div>
<div class="b" style="left:350px;top:168px;letter-spacing:0.039px;"><span>Intercom Systems (Showing 1) (1 Selected)</span></div>
<div class="b" style="left:670px;top:168px;letter-spacing:-0.038px;"><span>Intercom Points (Showing 1)</span></div>
<div class="b" style="left:904px;top:168px;letter-spacing:-0.203px;"><span>Scheduled Tasks (Showing 4)</span></div>
<div class="b" style="left:1141px;top:168px;letter-spacing:-0.053px;"><span>Schematic Maps (Showing 1) (1 Selected)</span></div>
<svg style="left:608px;top:170px;" width="9" height="11" viewBox="0 0 9 11"><path d="M2.500.5h4M3 .5v5M6 .5v5M1 5.500h7M4.500 5.500v5" fill="none" stroke="#555" stroke-width="1"/></svg>
<svg style="left:842px;top:170px;" width="9" height="11" viewBox="0 0 9 11"><path d="M2.500.5h4M3 .5v5M6 .5v5M1 5.500h7M4.500 5.500v5" fill="none" stroke="#555" stroke-width="1"/></svg>
<svg style="left:1079px;top:170px;" width="9" height="11" viewBox="0 0 9 11"><path d="M2.500.5h4M3 .5v5M6 .5v5M1 5.500h7M4.500 5.500v5" fill="none" stroke="#555" stroke-width="1"/></svg>
<svg style="left:1385px;top:171px;" width="11" height="9" viewBox="0 0 11 9"><path d="M10.500 2.500v4M10.500 3h-5M10.500 6h-5M5.500 1v7M5.500 4.500h-5" fill="none" stroke="#555" stroke-width="1"/></svg>
<svg style="left:1407px;top:171px;" width="9" height="9" viewBox="0 0 9 9"><path d="M.5.5l8 8M8.5 .5l-8 8" stroke="#444" stroke-width="1.1"/></svg>
<svg style="left:1908px;top:174px;" width="8" height="5" viewBox="0 0 8 5"><path d="M0 0h7L3.500 4z" fill="#555"/></svg>
<svg style="left:332px;top:167px;" width="14" height="15" viewBox="0 0 14 15"><rect x="0" y="0" width="8" height="6" fill="#3a8fe0" stroke="#1c4f90" stroke-width=".8"/><rect x="1.500" y="7" width="5" height="1.500" fill="#1c4f90"/><rect x="4" y="5" width="6" height="4.500" fill="#6ab0f0" stroke="#1c4f90" stroke-width=".7"/><rect x="10" y="2" width="4" height="13" rx="1" fill="#555" stroke="#222" stroke-width=".6"/><rect x="11" y="4" width="2" height="3" fill="#9fd0ff"/><path d="M0 11h7" stroke="#555" stroke-width="1.200"/></svg>
<svg style="left:652px;top:168px;" width="15" height="12" viewBox="0 0 15 12"><rect x=".5" y=".5" width="14" height="11" rx="2" fill="#3c3c3c" stroke="#111" stroke-width=".8"/><rect x="2" y="2.500" width="3.500" height="3" fill="#e03a2e"/><rect x="2" y="6.500" width="3.500" height="3" fill="#3cb54a"/><path d="M7 3.500h6M7 6h6M7 8.500h6" stroke="#e6e6e6" stroke-width="1.100"/></svg>
<svg style="left:884px;top:166px;" width="16" height="17" viewBox="0 0 16 17"><path d="M0 2h5l1.500 2H12v11H0z" fill="#f6c94c" stroke="#c99a22" stroke-width=".6"/><path d="M1 1.500l6-1.500v15l-6-.5z" fill="#fbe08a" stroke="#c99a22" stroke-width=".5"/><circle cx="11.500" cy="12" r="4.300" fill="#f3f6fb" stroke="#7d8fae" stroke-width=".9"/><path d="M11.500 9.500V12h2" stroke="#444" stroke-width=".9" fill="none"/></svg>
<svg style="left:1124px;top:168px;" width="14" height="14" viewBox="0 0 14 14"><path d="M8.500 13.500H13.500V.5H.5V13.500H6M4.500 .5V5.500H.5M13.500 4.500H7.500V6.500M.5 10.500H3.500V13.500M11 9.500H9.500V13.500" fill="none" stroke="#b4b4b4" stroke-width="1"/></svg>
<div style="left:1675px;top:188px;width:241px;height:45px;background:#f0f0f0;"></div>
<div style="left:1888px;top:189px;width:1px;height:20px;background:#c9c9c9;"></div>
<div style="left:1900px;top:194px;width:3px;height:10px;background:#111;"></div>
<div style="left:1905px;top:194px;width:3px;height:10px;background:#111;"></div>
<div style="left:1675px;top:233px;width:241px;height:1px;background:#ababab;"></div>
<div style="left:1675px;top:234px;width:241px;height:20px;background:#fff;"></div>
<svg style="left:1900px;top:236px;" width="13" height="14" viewBox="0 0 13 14"><circle cx="5.500" cy="5.500" r="4.500" fill="none" stroke="#444" stroke-width="1"/><path d="M8.500 9l3.500 4.500" stroke="#444" stroke-width="1.500"/><path d="M7 12.500h5.500" stroke="#bbb" stroke-width="1"/></svg>
<div style="left:1675px;top:254px;width:241px;height:23px;background:#d3d3d3;"></div>
<div style="left:1675px;top:277px;width:241px;height:628px;background:#fff;"></div>
<div style="left:1675px;top:905px;width:241px;height:1px;background:#c8c8c8;"></div>
<div style="left:2px;top:910px;width:956px;height:221px;background:#fff;border:1px solid #c4c4c4;"></div>
<div style="left:3px;top:911px;width:954px;height:22px;background:#dedede;"></div>
<div style="left:3px;top:933px;width:954px;height:1px;background:#c6c6c6;"></div>
<div class="b" style="left:9px;top:915px;letter-spacing:0.131px;"><span>Intruder Review</span></div>
<div style="left:3px;top:934px;width:954px;height:70px;background:#f0f0f0;"></div>
<div style="left:7px;top:940px;width:2px;height:2px;background:#8a8a8a;"></div>
<div style="left:7px;top:944px;width:2px;height:2px;background:#8a8a8a;"></div>
<div style="left:7px;top:948px;width:2px;height:2px;background:#8a8a8a;"></div>
<div style="left:7px;top:964px;width:2px;height:2px;background:#8a8a8a;"></div>
<div style="left:7px;top:968px;width:2px;height:2px;background:#8a8a8a;"></div>
<div style="left:7px;top:972px;width:2px;height:2px;background:#8a8a8a;"></div>
<div class="s" style="left:17px;top:937px;letter-spacing:-0.339px;"><span>Source</span></div>
<div style="left:58px;top:935px;width:133px;height:20px;background:#fff;border:1px solid #ababab;"></div>
<div class="s" style="left:199px;top:937px;letter-spacing:-0.386px;"><span>Message</span></div>
<div style="left:250px;top:935px;width:120px;height:20px;background:#fff;border:1px solid #ababab;"></div>
<div class="s" style="left:17px;top:961px;letter-spacing:-0.281px;"><span>Period</span></div>
<div style="left:56px;top:959px;width:320px;height:20px;background:#fff;border:1px solid #ababab;"></div>
<div class="t" style="left:61px;top:962px;letter-spacing:-0.129px;"><span>Recent History (Live)</span></div>
<div style="left:3px;top:1003px;width:954px;height:1px;background:#ababab;"></div>
<div style="left:25px;top:982px;width:1px;height:21px;background:#bdbdbd;"></div>
<div style="left:103px;top:982px;width:1px;height:21px;background:#bdbdbd;"></div>
<div style="left:178px;top:982px;width:1px;height:21px;background:#bdbdbd;"></div>
<div class="h" style="left:29px;top:985px;letter-spacing:-0.420px;"><span>Local Time</span></div>
<svg style="left:87px;top:990px;" width="10" height="6" viewBox="0 0 10 6"><path d="M0 0h9L4.500 5z" fill="#555"/></svg>
<div class="h" style="left:107px;top:985px;letter-spacing:-0.310px;"><span>Source</span></div>
<div class="h" style="left:183px;top:985px;letter-spacing:0.203px;"><span>Text</span></div>
<div class="t" style="left:410px;top:1047px;color:#8c8c8c;letter-spacing:-0.117px;"><span>There are no items in this list</span></div>
<div style="left:3px;top:1103px;width:954px;height:28px;background:#dedede;"></div>
<div style="left:3px;top:1103px;width:954px;height:1px;background:#c9c9c9;"></div>
<div style="left:6px;top:1104px;width:105px;height:23px;background:#dedede;border:1px solid #c4c4c4;border-top:none;"></div>
<div style="left:111px;top:1103px;width:115px;height:25px;background:#f0f0f0;border:1px solid #c4c4c4;border-top:none;"></div>
<svg style="left:13px;top:1107px;" width="16" height="16" viewBox="0 0 16 16"><path d="M3 2c0-1.500 1.500-2 3-2h7c1.500 0 2 1.500 1 2.500-1 0-2 0-2 1v7c0 2-1 3-3 3H2c-1.500 0-2-1.500-1.500-2.500H3z" fill="#e3e6f0" stroke="#8c92a8" stroke-width=".7"/><circle cx="5" cy="4.500" r="3.200" fill="#f4f8ff" stroke="#3c62b8" stroke-width=".9"/><path d="M3.800 3.500l1.300 1.300 1.400-1" stroke="#222" stroke-width=".7" fill="none"/><rect x="8.500" y="6.500" width="4.500" height="8.500" fill="#c97f3a" stroke="#8a4d17" stroke-width=".6"/></svg>
<div class="t" style="left:33px;top:1108px;letter-spacing:-0.276px;"><span>Access Review</span></div>
<svg style="left:120px;top:1108px;" width="16" height="16" viewBox="0 0 16 16"><path d="M3 2c0-1.500 1.500-2 3-2h7c1.500 0 2 1.500 1 2.500-1 0-2 0-2 1v7c0 2-1 3-3 3H2c-1.500 0-2-1.500-1.500-2.500H3z" fill="#e3e6f0" stroke="#8c92a8" stroke-width=".7"/><circle cx="5" cy="4.500" r="3.200" fill="#f4f8ff" stroke="#3c62b8" stroke-width=".9"/><path d="M3.800 3.500l1.300 1.300 1.400-1" stroke="#222" stroke-width=".7" fill="none"/><path d="M5 11.500l5-2.300 5 2.300-5 2.300z" fill="#e8e2a0" stroke="#777" stroke-width=".4"/><path d="M10 9.200l2.500 1.150L10 11.500 7.500 10.350z" fill="#111"/><path d="M10 11.500l2.500 1.150L10 13.800 7.500 12.650z" fill="#111"/></svg>
<div class="t" style="left:139px;top:1109px;letter-spacing:0.064px;"><span>Intruder Review</span></div>
<div style="left:962px;top:910px;width:954px;height:221px;background:#fff;border:1px solid #c4c4c4;border-right:none;"></div>
<div style="left:963px;top:911px;width:953px;height:22px;background:#dedede;"></div>
<div style="left:963px;top:933px;width:953px;height:1px;background:#c6c6c6;"></div>
<div style="left:963px;top:934px;width:953px;height:22px;background:#f0f0f0;"></div>
<div style="left:963px;top:956px;width:953px;height:1px;background:#a0a0a0;"></div>
<svg style="left:1861px;top:917px;" width="10" height="10" viewBox="0 0 10 10"><rect x=".5" y=".5" width="8" height="8" fill="none" stroke="#444" stroke-width="1"/></svg>
<svg style="left:1881px;top:917px;" width="9" height="11" viewBox="0 0 9 11"><path d="M2.500.5h4M3 .5v5M6 .5v5M1 5.500h7M4.500 5.500v5" fill="none" stroke="#444" stroke-width="1"/></svg>
<svg style="left:1901px;top:917px;" width="9" height="9" viewBox="0 0 9 9"><path d="M.5.5l8 8M8.5 .5l-8 8" stroke="#444" stroke-width="1.1"/></svg>
<div style="left:0px;top:1132px;width:1916px;height:27px;background:#dedede;"></div>
<div style="left:0px;top:1132px;width:1916px;height:1px;background:#cfcfcf;"></div>
<div class="t" style="left:4px;top:1140px;letter-spacing:0.009px;"><span>Integriti - Corporate Edition - Client Version: 20.0.2.16435</span></div>
<div class="t" style="left:1648px;top:1140px;letter-spacing:0.008px;"><span>Logged In as Installer (Connected to 127.0.0.1:44000)</span></div>
<div style="left:256px;top:186px;width:1419px;height:855px;background:#f0f0f0;border:1px solid #9a9a9a;box-shadow:0 0 0 1px rgba(200,200,200,.6);"></div>
<svg style="left:266px;top:195px;" width="14" height="14" viewBox="0 0 14 14"><path d="M8.500 13.500H13.500V.5H.5V13.500H6M4.500 .5V5.500H.5M13.500 4.500H7.500V6.500M.5 10.500H3.500V13.500M11 9.500H9.500V13.500" fill="none" stroke="#b4b4b4" stroke-width="1"/></svg>
<div class="t" style="left:285px;top:195px;color:#767676;letter-spacing:-0.161px;"><span>Schematic Map: Main office area</span></div>
<div style="left:1550px;top:203px;width:10px;height:1px;background:#555;"></div>
<svg style="left:1598px;top:197px;" width="10" height="10" viewBox="0 0 10 10"><rect x=".5" y=".5" width="9" height="9" fill="none" stroke="#555" stroke-width="1"/></svg>
<svg style="left:1646px;top:197px;" width="10" height="10" viewBox="0 0 10 10"><path d="M.5.5l9 9M9.5 .5l-9 9" stroke="#555" stroke-width="1.1"/></svg>
<div style="left:261px;top:223px;width:2px;height:2px;background:#8a8a8a;"></div>
<div style="left:261px;top:227px;width:2px;height:2px;background:#8a8a8a;"></div>
<div style="left:261px;top:231px;width:2px;height:2px;background:#8a8a8a;"></div>
<svg style="left:273px;top:222px;" width="14" height="14" viewBox="0 0 14 14"><path d="M.5.5h12l1 1v12H.5z" fill="#4646c4" stroke="#2a2a90" stroke-width="1"/><path d="M.5.5h6l-6 8z" fill="#8a8ae8" opacity=".55"/><rect x="3" y="1" width="8" height="5.500" fill="#f1f3fb"/><rect x="4" y="9.500" width="6.500" height="4" fill="#d9dcf0"/><rect x="5" y="10.300" width="2.300" height="3.200" fill="#15154a"/></svg>
<svg style="left:298px;top:228px;" width="6" height="4" viewBox="0 0 6 4"><path d="M0 0h6L3 3.500z" fill="#222"/></svg>
<svg style="left:316px;top:222px;" width="15" height="14" viewBox="0 0 15 14"><path d="M4 4.500C7.500 1 13.500 2 13 7c-.4 3.200-2.500 5-5 6" fill="none" stroke="#3a72dc" stroke-width="2.300" stroke-linecap="round"/><path d="M.8 2.500l6.700-.8-3 6.800z" fill="#3a72dc"/></svg>
<div style="left:338px;top:220px;width:1px;height:19px;background:#cfcfcf;"></div>
<svg style="left:348px;top:223px;" width="11" height="12" viewBox="0 0 11 12"><path d="M1 0v12" stroke="#b0b0b0" stroke-width="2"/><path d="M10.500 0v12L3 6z" fill="#b0b0b0"/></svg>
<svg style="left:376px;top:223px;" width="8" height="12" viewBox="0 0 8 12"><path d="M7.500 0v12L.5 6z" fill="#b0b0b0"/></svg>
<div style="left:395px;top:220px;width:1px;height:19px;background:#cfcfcf;"></div>
<div style="left:402px;top:219px;width:50px;height:21px;background:#fff;border:1px solid #ababab;"></div>
<div class="t" style="left:407px;top:223px;"><span>1</span></div>
<div class="s" style="left:460px;top:221px;letter-spacing:-0.069px;"><span>of 1 Items</span></div>
<svg style="left:526px;top:223px;" width="8" height="12" viewBox="0 0 8 12"><path d="M.5 0v12l7-6z" fill="#b0b0b0"/></svg>
<svg style="left:550px;top:223px;" width="11" height="12" viewBox="0 0 11 12"><path d="M10 0v12" stroke="#b0b0b0" stroke-width="2"/><path d="M.5 0v12L8 6z" fill="#b0b0b0"/></svg>
<svg style="left:575px;top:223px;" width="14" height="14" viewBox="0 0 15 15"><circle cx="7.500" cy="7.500" r="7" fill="#2f9e2a" stroke="#1c6e18" stroke-width=".8"/><circle cx="7.500" cy="6" r="5" fill="#5cc24a" opacity=".6"/><path d="M7.500 3.500v8M3.500 7.500h8" stroke="#fff" stroke-width="2.400"/></svg>
<svg style="left:602px;top:223px;" width="12" height="13" viewBox="0 0 12 13"><path d="M1 1c3.500 3 7 7 10 11M11 1C7.500 4.500 4 8 1.500 12" fill="none" stroke="#e8341c" stroke-width="2" stroke-linecap="round"/></svg>
<div style="left:623px;top:220px;width:1px;height:19px;background:#cfcfcf;"></div>
<svg style="left:631px;top:222px;" width="16" height="15" viewBox="0 0 16 15"><rect x="1" y="1" width="5" height="4" fill="#333"/><path d="M3.500 5v8M3.500 8.500h5M3.500 13h7" stroke="#333" stroke-width="1.200" fill="none"/><rect x="8" y="7" width="4" height="3.500" fill="#333"/><rect x="11" y="11" width="4" height="3.500" fill="#333"/></svg>
<div style="left:654px;top:220px;width:1px;height:19px;background:#cfcfcf;"></div>
<svg style="left:662px;top:221px;" width="17" height="16" viewBox="0 0 17 16"><rect x=".5" y="1.500" width="13" height="9" fill="#eef3fb" stroke="#3a6fd0" stroke-width="1"/><rect x=".5" y="1.500" width="13" height="2.500" fill="#3a6fd0"/><path d="M9 6h4v4h3l-5 5.500L6 10h3z" fill="#555" stroke="#222" stroke-width=".6"/></svg>
<div style="left:686px;top:220px;width:1px;height:19px;background:#cfcfcf;"></div>
<svg style="left:696px;top:222px;" width="14" height="14" viewBox="0 0 14 14"><path d="M8.500 13.500H13.500V.5H.5V13.500H6M4.500 .5V5.500H.5M13.500 4.500H7.500V6.500M.5 10.500H3.500V13.500M11 9.500H9.500V13.500" fill="none" stroke="#b4b4b4" stroke-width="1"/></svg>
<div class="s" style="left:713px;top:221px;letter-spacing:0.064px;"><span>View/Open Map</span></div>
<svg style="left:812px;top:222px;" width="14" height="14" viewBox="0 0 14 14"><path d="M8.500 13.500H13.500V.5H.5V13.500H6M4.500 .5V5.500H.5M13.500 4.500H7.500V6.500M.5 10.500H3.500V13.500M11 9.500H9.500V13.500" fill="none" stroke="#b4b4b4" stroke-width="1"/></svg>
<div class="s" style="left:829px;top:221px;letter-spacing:-0.013px;"><span>View/Open Map In New Tab</span></div>
<div style="left:257px;top:241px;width:1417px;height:1px;background:#cdcdcd;"></div>
<div style="left:259px;top:243px;width:1413px;height:795px;border:1px solid #cbcbcb;"></div>
<div style="left:267px;top:251px;width:1397px;height:779px;border:1px solid #cbcbcb;"></div>
<div style="left:269px;top:253px;width:262px;height:775px;border:1px solid #cbcbcb;"></div>
<div class="t" style="left:270px;top:255px;letter-spacing:-0.492px;"><span>Site</span></div>
<div style="left:271px;top:270px;width:248px;height:19px;background:#fff;border:1px solid #ababab;"></div>
<svg style="left:275px;top:271px;" width="16" height="16" viewBox="0 0 16 16"><rect x="1" y="1" width="9.500" height="14" fill="#2ba2f2"/><rect x="10.500" y="2" width="4.500" height="13" fill="#55b8f6"/><path d="M3 3v9M5.500 3v9M8 3v9M12 4v10M13.500 4v10" stroke="#8fd2fb" stroke-width="1" stroke-dasharray="1 1"/><rect x="4.500" y="12" width="2.500" height="3" fill="#1a5fa0"/><path d="M0 15.500h16" stroke="#4a9ad8" stroke-width="1"/></svg>
<div class="t lnk" style="left:293px;top:273px;letter-spacing:-0.073px;"><span>Default Site</span></div>
<div style="left:507px;top:279px;width:2px;height:2px;background:#444;"></div>
<div style="left:510px;top:279px;width:2px;height:2px;background:#444;"></div>
<div style="left:513px;top:279px;width:2px;height:2px;background:#444;"></div>
<div class="t" style="left:270px;top:293px;letter-spacing:-0.586px;"><span>Name</span></div>
<div style="left:271px;top:308px;width:248px;height:30px;background:#fff;border:1px solid #ababab;"></div>
<div class="big" style="left:275px;top:311px;letter-spacing:-0.053px;"><span>Main office area</span></div>
<div class="t" style="left:270px;top:342px;letter-spacing:-0.293px;"><span>Last Changed By</span></div>
<div style="left:271px;top:357px;width:248px;height:20px;background:#f0f0f0;border:1px solid #d4d4d4;"></div>
<svg style="left:274px;top:359px;" width="15" height="15" viewBox="0 0 15 15"><circle cx="4.500" cy="5" r="3.800" fill="url(#gRedBall)"/><path d="M10 .5l4.500 8.500h-8z" fill="#1f4fb8"/><path d="M10 .5l1.500 8.500h-5z" fill="#3a7ae8"/><path d="M3 8.500l5-2 5.500 2-5 2.500z" fill="#4fd04a"/><path d="M3 8.500v4l5.500 2.500v-4z" fill="#1f8a2a"/><path d="M13.500 8.500v4l-5 2.500v-4z" fill="#2fae3a"/></svg>
<div class="t lnk" style="left:293px;top:360px;letter-spacing:0.052px;"><span>Installer</span></div>
<div class="t" style="left:270px;top:380px;letter-spacing:-0.163px;"><span>Created</span></div>
<div class="t" style="left:381px;top:380px;letter-spacing:-0.074px;"><span>Modified</span></div>
<div style="left:271px;top:395px;width:109px;height:20px;background:#f0f0f0;border:1px solid #d4d4d4;"></div>
<div class="t" style="left:275px;top:398px;letter-spacing:0.094px;"><span>01/12/2020</span></div>
<svg style="left:369px;top:403px;" width="7" height="4" viewBox="0 0 7 4"><path d="M0 0h7L3.500 3.500z" fill="#666"/></svg>
<div style="left:382px;top:395px;width:137px;height:20px;background:#f0f0f0;border:1px solid #d4d4d4;"></div>
<div class="t" style="left:386px;top:398px;letter-spacing:0.094px;"><span>06/01/2021</span></div>
<svg style="left:507px;top:403px;" width="7" height="4" viewBox="0 0 7 4"><path d="M0 0h7L3.500 3.500z" fill="#666"/></svg>
<div class="t" style="left:270px;top:418px;letter-spacing:-0.150px;"><span>Notes</span></div>
<div style="left:271px;top:433px;width:248px;height:336px;background:#fff;border:1px solid #ababab;"></div>
<div style="left:502px;top:434px;width:16px;height:334px;background:#f0f0f0;"></div>
<div style="left:503px;top:435px;width:14px;height:16px;background:#fff;border:1px solid #dcdcdc;"></div>
<svg style="left:506px;top:441px;" width="8" height="5" viewBox="0 0 8 5"><path d="M0 4.500h7L3.500 .5z" fill="#c4c4c4"/></svg>
<div style="left:503px;top:752px;width:14px;height:16px;background:#fff;border:1px solid #dcdcdc;"></div>
<svg style="left:506px;top:758px;" width="8" height="5" viewBox="0 0 8 5"><path d="M0 .5h7L3.500 4.500z" fill="#c4c4c4"/></svg>
<div class="t" style="left:270px;top:781px;letter-spacing:-0.286px;"><span>Legend</span></div>
<div style="left:271px;top:796px;width:248px;height:229px;background:#f0f0f0;border:1px solid #c0c0c0;overflow:hidden;"></div>
<div class="t" style="left:274px;top:797px;letter-spacing:-0.184px;"><span>Select Mode:</span></div>
<div class="t" style="left:274px;top:823px;letter-spacing:-0.190px;"><span>Hold Space - Temporarily Switch to Pan Mode</span></div>
<div class="t" style="left:274px;top:849px;letter-spacing:-0.093px;"><span>2N IP Verso (Icon) Selected:</span></div>
<div class="t" style="left:274px;top:875px;letter-spacing:-0.148px;"><span>Hold Shift (While Resizing) - Maintain aspect</span></div>
<div class="t" style="left:274px;top:888px;letter-spacing:0.245px;"><span>ration</span></div>
<div class="t" style="left:274px;top:914px;letter-spacing:-0.072px;"><span>Ctrl+Click - Add/Remove Element to/from</span></div>
<div class="t" style="left:274px;top:927px;letter-spacing:-0.042px;"><span>current selection</span></div>
<div class="t" style="left:274px;top:940px;letter-spacing:-0.023px;"><span>Ctrl+C - Copy current selection</span></div>
<div class="t" style="left:274px;top:953px;letter-spacing:-0.056px;"><span>Ctrl+V - Paste</span></div>
<div class="t" style="left:274px;top:966px;letter-spacing:-0.133px;"><span>Delete - Remove selected Element/s</span></div>
<div class="t" style="left:274px;top:992px;letter-spacing:-0.126px;"><span>Arrow Keys - Move selection</span></div>
<div class="t" style="left:274px;top:1005px;letter-spacing:0.041px;"><span>Ctrl+Arrow Key - Move selection faster, or</span></div>
<div style="left:272px;top:1018px;width:229px;height:6px;overflow:hidden;">
<div class="t" style="left:2px;top:0px;letter-spacing:-0.112px;"><span>move to next grid line when &#x27;Grid Snap&#x27; is</span></div>
</div>
<div style="left:502px;top:797px;width:16px;height:227px;background:#f0f0f0;"></div>
<div style="left:502px;top:798px;width:15px;height:16px;background:#fff;border:1px solid #a9a9a9;"></div>
<svg style="left:506px;top:804px;" width="8" height="5" viewBox="0 0 8 5"><path d="M0 4.500h7L3.500 .5z" fill="#555"/></svg>
<div style="left:502px;top:814px;width:15px;height:109px;background:#fff;border:1px solid #8f8f8f;"></div>
<div style="left:502px;top:1008px;width:15px;height:16px;background:#fff;border:1px solid #a9a9a9;"></div>
<svg style="left:506px;top:1014px;" width="8" height="5" viewBox="0 0 8 5"><path d="M0 .5h7L3.500 4.500z" fill="#555"/></svg>
<svg style="left:523px;top:636px;" width="4" height="8" viewBox="0 0 4 8"><path d="M4 0v7L.5 3.500z" fill="#555"/></svg>
<svg style="left:541px;top:256px;" width="17" height="17" viewBox="0 0 17 17"><path d="M5.500 14c4.500 1.800 9.500-.8 9.500-5.500S10.500 2 6 3.500" fill="none" stroke="#b0b0b0" stroke-width="3"/><path d="M.5 6.500L8 .5v9z" fill="#b0b0b0" transform="rotate(-12 4 5)"/></svg>
<div class="s" style="left:562px;top:257px;color:#8a8a8a;letter-spacing:0.078px;"><span>Undo</span></div>
<svg style="left:608px;top:256px;" width="17" height="17" viewBox="0 0 17 17"><path d="M11.500 14c-4.500 1.800-9.500-.8-9.500-5.500S6.500 2 11 3.500" fill="none" stroke="#b0b0b0" stroke-width="3"/><path d="M16.500 6.500L9 .5v9z" fill="#b0b0b0" transform="rotate(12 13 5)"/></svg>
<div class="s" style="left:629px;top:257px;color:#8a8a8a;letter-spacing:-0.422px;"><span>Redo</span></div>
<div style="left:667px;top:256px;width:1px;height:19px;background:#cfcfcf;"></div>
<div style="left:818px;top:256px;width:1px;height:19px;background:#cfcfcf;"></div>
<div style="left:1126px;top:256px;width:1px;height:19px;background:#cfcfcf;"></div>
<div style="left:678px;top:255px;width:50px;height:20px;background:#fff;border:1px solid #ababab;"></div>
<div class="t" style="left:683px;top:258px;"><span>99</span></div>
<div class="s" style="left:744px;top:257px;letter-spacing:-0.336px;"><span>Reset Zoom</span></div>
<div class="s" style="left:829px;top:257px;letter-spacing:-0.032px;"><span>Auto Switch to Select Tool:</span></div>
<div style="left:980px;top:258px;width:14px;height:14px;background:#fff;border:1px solid #b4b4b4;"></div>
<svg style="left:982px;top:261px;" width="9" height="8" viewBox="0 0 9 8"><path d="M.8 4l2.700 2.800L8.200 .8" fill="none" stroke="#7a7a7a" stroke-width="1.300"/></svg>
<svg style="left:1016px;top:257px;" width="15" height="15" viewBox="0 0 15 15"><path d="M1 0v15" stroke="#1c6e18" stroke-width="1.600"/><rect x="3" y="2" width="8" height="4.500" fill="#3aa535" stroke="#1c6e18" stroke-width=".8"/><rect x="3" y="9" width="11.500" height="4.500" fill="#3aa535" stroke="#1c6e18" stroke-width=".8"/></svg>
<div class="s" style="left:1036px;top:257px;letter-spacing:-0.075px;"><span>Align Elements</span></div>
<svg style="left:1140px;top:257px;transform:scale(.92,.95);" width="13" height="15" viewBox="0 0 13 15"><path d="M6.500 .3L12.700 7.500H9V14.700H4V7.500H.3z" fill="url(#gArrowG)" stroke="#3a8a1a" stroke-width=".5"/></svg>
<div class="s" style="left:1158px;top:257px;letter-spacing:0.069px;"><span>Auto-Allocate Positions</span></div>
<div style="left:533px;top:278px;width:61px;height:24px;background:#cfdcee;border:1px solid #b5cbea;"></div>
<svg style="left:541px;top:283px;" width="12" height="15" viewBox="0 0 12 15"><path d="M1 .5v12l3-2.800 2 4.800 2.200-1-2-4.500h4z" fill="#2f5fc0" stroke="#1a3a88" stroke-width=".7"/></svg>
<div class="s" style="left:558px;top:282px;letter-spacing:-0.393px;"><span>Select</span></div>
<svg style="left:599px;top:282px;" width="16" height="16" viewBox="0 0 16 16"><path d="M6.500 15.500L2 10.500C.5 9 1.500 7 3.200 7.800L4.800 9.600V3.200C4.800 1.600 7 1.600 7 3.200V2.200C7 .6 9.400 .6 9.400 2.200V3C9.400 1.600 11.600 1.600 11.600 3.200V5C11.600 3.800 13.800 3.800 13.800 5.400V10C13.800 12 12.500 13.500 11.500 15.500Z" fill="#f4f7fc" stroke="#0e1660" stroke-width="1.100" stroke-linejoin="round"/><path d="M7 3.200v5M9.400 3v5M11.600 5v3.500" stroke="#0e1660" stroke-width="1.100"/><path d="M6 14l-2.500-3 2 .5 6 .5-1 2z" fill="#d5deee" opacity=".7"/></svg>
<div class="s" style="left:619px;top:282px;letter-spacing:-0.786px;"><span>Pan</span></div>
<svg style="left:650px;top:285px;" width="14" height="11" viewBox="0 0 14 11"><rect x=".5" y=".5" width="13" height="9.500" fill="#4f78c4" stroke="#1c2f66" stroke-width="1"/><rect x="1" y="6" width="12" height="3.500" fill="#3a62b0" opacity=".6"/></svg>
<div class="s" style="left:669px;top:282px;letter-spacing:-0.227px;"><span>Rectangle</span></div>
<svg style="left:731px;top:284px;" width="16" height="11" viewBox="0 0 16 11"><ellipse cx="8" cy="5.500" rx="7" ry="4.500" fill="#4a7acc" stroke="#14244f" stroke-width="1.400"/></svg>
<div class="s" style="left:751px;top:282px;letter-spacing:-0.337px;"><span>Ellipse</span></div>
<svg style="left:794px;top:282px;" width="15" height="16" viewBox="0 0 15 16"><path d="M1 1l13 14" stroke="#2f5fc0" stroke-width="2"/></svg>
<div class="s" style="left:814px;top:282px;letter-spacing:-0.172px;"><span>Line</span></div>
<svg style="left:847px;top:283px;" width="15" height="15" viewBox="0 0 15 15"><path d="M1 2h5l2.500 10h5" fill="none" stroke="#2f5fc0" stroke-width="1.400"/><circle cx="6" cy="2.200" r="1.500" fill="#e0241f"/><circle cx="8.500" cy="12" r="1.500" fill="#e0241f"/></svg>
<div class="s" style="left:866px;top:282px;letter-spacing:0.145px;"><span>Multi-segment Line</span></div>
<svg style="left:981px;top:283px;" width="15" height="14" viewBox="0 0 15 14"><path d="M5 1l5 .5L9 6l5 4v3.500H1V9z" fill="#4a7acc" stroke="#14244f" stroke-width="1.200" stroke-linejoin="round"/></svg>
<div class="s" style="left:1000px;top:282px;letter-spacing:-0.086px;"><span>Freeform</span></div>
<svg style="left:1059px;top:283px;" width="15" height="15" viewBox="0 0 15 15"><circle cx="7.500" cy="7.500" r="7" fill="#d8dde8" stroke="#6a7288" stroke-width=".9"/><circle cx="7.500" cy="7.500" r="5.300" fill="url(#gBlueBall)"/><text x="7.500" y="11" font-family="Liberation Sans,sans-serif" font-size="9" font-weight="bold" fill="#fff" text-anchor="middle">?</text></svg>
<div class="s" style="left:1078px;top:282px;letter-spacing:0.078px;"><span>Icon</span></div>
<svg style="left:1113px;top:283px;" width="13" height="16" viewBox="0 0 13 16"><path d="M2 2l10 1.500v12L2 14z" fill="#d5d8dc"/><rect x=".5" y=".5" width="10.500" height="13" fill="#f6f7f8" stroke="#b9bcc0" stroke-width=".8"/><path d="M.5 9l10.500-4v8.500H.5z" fill="#dfe2e6" opacity=".7"/><path d="M3 2.500h5.600v2H6.900v6.500H4.700V4.500H3z" fill="#4a4a4a"/></svg>
<div class="s" style="left:1131px;top:282px;letter-spacing:-0.275px;"><span>Label</span></div>
<svg style="left:1169px;top:284px;" width="16" height="13" viewBox="0 0 16 13"><rect x=".5" y=".5" width="15" height="12" fill="#eaf2fb" stroke="#555" stroke-width="1"/><rect x="2" y="2" width="12" height="6" fill="#5a9ae0"/><path d="M2 11l4-4 3 2.500 2-1.500 3 3z" fill="#3a7a3a"/></svg>
<div class="s" style="left:1189px;top:282px;letter-spacing:-0.072px;"><span>Image</span></div>
<div style="left:533px;top:302px;width:762px;height:702px;background:#dcdcdc;border:1px solid #5f5f5f;"></div>
<div style="left:537px;top:402px;width:753px;height:502px;background:#fff;"></div>
<div style="left:544px;top:313px;width:34px;height:65px;background:#fff;border:2px solid #b2b2b2;border-radius:4px;"></div>
<div style="left:546px;top:345px;width:30px;height:1px;background:#d0d0d0;"></div>
<div style="left:555px;top:329px;width:12px;height:2.4px;background:#111;"></div>
<div style="left:559.8px;top:324.2px;width:2.4px;height:12px;background:#111;"></div>
<div style="left:555px;top:359.5px;width:12px;height:2.4px;background:#111;"></div>
<div style="left:584px;top:313px;width:80px;height:26px;background:#fff;border:1px solid #111;box-shadow:1px 1px 2px rgba(0,0,0,.5);"></div>
<div class="s" style="left:589px;top:317px;font-size:12.500px;"><span>Showing 1</span></div>
<div class="s" style="left:1094.5px;top:519px;font-size:14px;color:#222;"><span>4</span></div>
<svg style="left:1090px;top:568px;" width="8" height="30" viewBox="0 0 8 30"><path d="M2 1c5 8 5 20 0 28" fill="none" stroke="#333" stroke-width="2"/></svg>
<div class="s" style="left:538px;top:1008px;letter-spacing:-0.246px;"><span>Mouse: 0, 0</span></div>
<div style="left:603px;top:1006px;width:1px;height:20px;background:#c9c9c9;"></div>
<div class="s" style="left:608px;top:1008px;letter-spacing:-0.319px;"><span>Selection Pos: 0, 0</span></div>
<div style="left:707px;top:1006px;width:1px;height:20px;background:#c9c9c9;"></div>
<div class="s" style="left:712px;top:1008px;letter-spacing:-0.387px;"><span>Selection Size: 0, 0</span></div>
<div style="left:812px;top:1006px;width:1px;height:20px;background:#c9c9c9;"></div>
<svg style="left:1298px;top:649px;" width="4" height="8" viewBox="0 0 4 8"><path d="M0 0v7l3.500-3.500z" fill="#555"/></svg>
<div style="left:643px;top:312px;width:451px;height:578px;background:#f0f0f0;border:1px solid #4a6a9f;box-shadow:1px 2px 7px rgba(0,0,0,.42);"></div>
<div class="t" style="left:653px;top:321px;letter-spacing:-0.057px;"><span>Configure Task Action</span></div>
<div style="left:968px;top:328px;width:11px;height:1px;background:#333;"></div>
<svg style="left:1016px;top:322px;" width="11" height="11" viewBox="0 0 11 11"><rect x=".5" y=".5" width="10" height="10" fill="none" stroke="#222" stroke-width="1"/></svg>
<svg style="left:1064px;top:322px;" width="12" height="12" viewBox="0 0 12 12"><path d="M.5.5l11 11M11.5 .5l-11 11" stroke="#222" stroke-width="1.2"/></svg>
<div style="left:656px;top:381px;width:425px;height:467px;border:1px solid #d5d5d5;"></div>
<div class="t" style="left:656px;top:358px;letter-spacing:-0.029px;"><span>Action Type:</span></div>
<div style="left:723px;top:355px;width:358px;height:20px;background:#fff;border:1px solid #ababab;"></div>
<div style="left:725px;top:357px;width:339px;height:16px;border:1px dotted #333;"></div>
<div class="t" style="left:727px;top:358px;letter-spacing:-0.109px;"><span>Invoke Integrated Device Command</span></div>
<svg style="left:1070px;top:364px;" width="7" height="4" viewBox="0 0 7 4"><path d="M0 0h7L3.500 3.500z" fill="#666"/></svg>
<div class="t" style="left:661px;top:389px;letter-spacing:-0.020px;"><span>Target Device</span></div>
<div style="left:751px;top:386px;width:196px;height:20px;background:#fff;border:1px solid #ababab;"></div>
<svg style="left:755px;top:390px;" width="15" height="12" viewBox="0 0 15 12"><rect x=".5" y=".5" width="14" height="11" rx="2" fill="#3c3c3c" stroke="#111" stroke-width=".8"/><rect x="2" y="2.500" width="3.500" height="3" fill="#e03a2e"/><rect x="2" y="6.500" width="3.500" height="3" fill="#3cb54a"/><path d="M7 3.500h6M7 6h6M7 8.500h6" stroke="#e6e6e6" stroke-width="1.100"/></svg>
<div class="t lnk" style="left:774px;top:389px;letter-spacing:-0.318px;"><span>2N IP Verso</span></div>
<svg style="left:921px;top:393px;" width="6" height="6" viewBox="0 0 6 6"><path d="M.5.5l5 5M5.500.5l-5 5" stroke="#e0241f" stroke-width="1.400"/></svg>
<div style="left:936px;top:395px;width:2px;height:2px;background:#444;"></div>
<div style="left:939px;top:395px;width:2px;height:2px;background:#444;"></div>
<div style="left:942px;top:395px;width:2px;height:2px;background:#444;"></div>
<div class="t" style="left:949px;top:389px;letter-spacing:-0.141px;"><span>Use From Context</span></div>
<div style="left:1051px;top:389px;width:14px;height:14px;background:#fff;border:1px solid #ababab;"></div>
<div class="t" style="left:661px;top:411px;letter-spacing:-0.536px;"><span>Command</span></div>
<div style="left:751px;top:408px;width:325px;height:20px;background:#fff;border:1px solid #ababab;"></div>
<div class="t" style="left:755px;top:411px;letter-spacing:0.041px;"><span>Set Output State</span></div>
<svg style="left:1065px;top:417px;" width="7" height="4" viewBox="0 0 7 4"><path d="M0 0h7L3.500 3.500z" fill="#666"/></svg>
<div class="t" style="left:661px;top:433px;letter-spacing:-0.248px;"><span>Log Review</span></div>
<div style="left:905px;top:433px;width:14px;height:14px;background:#fff;border:1px solid #ababab;"></div>
<div style="left:647px;top:349px;width:441px;height:86px;border:5px solid #ed1c24;"></div>
<div style="left:661px;top:452px;width:25px;height:23px;background:#cfdcee;border:1px solid #b5cbea;"></div>
<svg style="left:666px;top:456px;" width="16" height="16" viewBox="0 0 16 16"><rect x=".5" y="1.500" width="5" height="5" fill="#fff" stroke="#555" stroke-width=".8"/><path d="M1.800 4h2.400M3 2.800v2.400" stroke="#222" stroke-width=".9"/><rect x=".5" y="9.500" width="5" height="5" fill="#fff" stroke="#555" stroke-width=".8"/><path d="M1.800 12h2.400M3 10.800v2.400" stroke="#222" stroke-width=".9"/><path d="M7.500 2.500h3M7.500 4.500h3M7.500 6.500h3M12 2.500h3M12 4.500h3M12 6.500h3M7.500 10.500h3M7.500 12.500h3M12 10.500h3M12 12.500h3" stroke="#888" stroke-width=".9"/></svg>
<svg style="left:692px;top:455px;" width="18" height="18" viewBox="0 0 18 18"><text x="0" y="8" font-family="Liberation Serif,serif" font-size="9.500" font-weight="bold" fill="#2f4fb0">A</text><text x="0" y="17" font-family="Liberation Serif,serif" font-size="9.500" font-weight="bold" fill="#a8282a">Z</text><path d="M12.500 1v13" stroke="#111" stroke-width="1.100"/><path d="M10.500 11.500l2 3.500 2-3.500z" fill="#111"/></svg>
<div style="left:715px;top:455px;width:1px;height:19px;background:#cfcfcf;"></div>
<div style="left:722px;top:454px;width:350px;height:20px;background:#fff;border:1px solid #ababab;"></div>
<svg style="left:1052px;top:457px;" width="13" height="14" viewBox="0 0 13 14"><circle cx="5.500" cy="5.500" r="4.500" fill="none" stroke="#444" stroke-width="1"/><path d="M8.500 9l3.500 4.500" stroke="#444" stroke-width="1.500"/><path d="M7 12.500h5.500" stroke="#bbb" stroke-width="1"/></svg>
<div style="left:661px;top:476px;width:415px;height:272px;background:#fff;border:1px solid #9f9f9f;"></div>
<div style="left:662px;top:477px;width:413px;height:18px;background:#f0f0f0;"></div>
<div style="left:662px;top:495px;width:413px;height:1px;background:#c9c9c9;"></div>
<svg style="left:673px;top:483px;" width="9" height="6" viewBox="0 0 9 6"><path d="M.5.5L4.500 4.500 8.500.5" fill="none" stroke="#555" stroke-width="1.100"/></svg>
<div class="b" style="left:687px;top:479px;letter-spacing:-0.147px;"><span>Command Settings</span></div>
<div style="left:662px;top:496px;width:21px;height:37px;background:#f0f0f0;"></div>
<div style="left:683px;top:496px;width:1px;height:37px;background:#c9c9c9;"></div>
<div style="left:781px;top:496px;width:1px;height:37px;background:#c9c9c9;"></div>
<div style="left:683px;top:514px;width:392px;height:1px;background:#c9c9c9;"></div>
<div style="left:662px;top:533px;width:413px;height:1px;background:#c9c9c9;"></div>
<div class="t" style="left:707px;top:498px;letter-spacing:0.105px;"><span>Port Identifier</span></div>
<div class="b" style="left:786px;top:498px;letter-spacing:0.289px;font-size:11.500px;"><span>relay1</span></div>
<div style="left:1062px;top:504px;width:2px;height:2px;background:#444;"></div>
<div style="left:1065px;top:504px;width:2px;height:2px;background:#444;"></div>
<div style="left:1068px;top:504px;width:2px;height:2px;background:#444;"></div>
<div class="t" style="left:707px;top:517px;letter-spacing:-0.011px;"><span>Contact Status</span></div>
<div style="left:922px;top:517px;width:14px;height:14px;background:#fff;border:1px solid #ababab;"></div>
<svg style="left:924px;top:520px;" width="9" height="8" viewBox="0 0 9 8"><path d="M.8 4l2.700 2.800L8.200 .8" fill="none" stroke="#7a7a7a" stroke-width="1.300"/></svg>
<svg style="left:864px;top:751px;" width="7" height="4" viewBox="0 0 7 4"><path d="M0 0h7L3.500 3.500z" fill="#666"/></svg>
<div class="bs" style="left:664px;top:757px;letter-spacing:-0.091px;"><span>Command Settings</span></div>
<div style="left:925px;top:854px;width:75px;height:23px;background:#fff;border:2px solid #2f4f9a;"></div>
<div class="t" style="left:925px;top:859px;width:75px;text-align:center;letter-spacing:-0.453px;"><span>OK</span></div>
<div style="left:1006px;top:854px;width:75px;height:23px;background:#fff;border:1px solid #ababab;"></div>
<div class="t" style="left:1006px;top:859px;width:75px;text-align:center;letter-spacing:-0.208px;"><span>Cancel</span></div>
<div style="left:1089px;top:885px;width:2px;height:2px;background:#b5b5b5;"></div>
<div style="left:1086px;top:885px;width:2px;height:2px;background:#b5b5b5;"></div>
<div style="left:1089px;top:882px;width:2px;height:2px;background:#b5b5b5;"></div>
<div style="left:1083px;top:885px;width:2px;height:2px;background:#b5b5b5;"></div>
<div style="left:1089px;top:879px;width:2px;height:2px;background:#b5b5b5;"></div>
<div style="left:1086px;top:882px;width:2px;height:2px;background:#b5b5b5;"></div>
<div style="left:1305px;top:325px;width:357px;height:344px;background:#f0f0f0;border:1px solid #9f9f9f;"></div>
<div style="left:1364px;top:304px;width:82px;height:22px;background:#dedede;border:1px solid #b5b5b5;"></div>
<div style="left:1305px;top:302px;width:59px;height:24px;background:#f0f0f0;border:1px solid #9f9f9f;border-bottom:none;"></div>
<div class="t" style="left:1312px;top:307px;letter-spacing:-0.357px;"><span>Elements</span></div>
<div class="t" style="left:1367px;top:308px;letter-spacing:-0.185px;"><span>Map Properties</span></div>
<svg style="left:1313px;top:330px;transform:scale(.92,.95);" width="13" height="15" viewBox="0 0 13 15"><path d="M6.500 .3L12.700 7.500H9V14.700H4V7.500H.3z" fill="url(#gArrowG)" stroke="#3a8a1a" stroke-width=".5"/></svg>
<svg style="left:1339px;top:330px;transform:scale(.92,.95);" width="13" height="15" viewBox="0 0 13 15"><g transform="rotate(180 6.500 7.500)"><path d="M6.500 .3L12.700 7.500H9V14.700H4V7.500H.3z" fill="url(#gArrowG)" stroke="#3a8a1a" stroke-width=".5"/></g></svg>
<div style="left:1361px;top:328px;width:1px;height:20px;background:#cfcfcf;"></div>
<svg style="left:1369px;top:331px;" width="14" height="14" viewBox="0 0 14 14"><path d="M1.500 1.500c4 3 7 6.500 11 11M12.500 1.500C8.500 5 5 8.500 1.500 12.500" fill="none" stroke="#e8342a" stroke-width="3" stroke-linecap="round"/></svg>
<div style="left:1391px;top:328px;width:1px;height:20px;background:#cfcfcf;"></div>
<div class="s" style="left:1398px;top:330px;letter-spacing:-0.171px;"><span>Locate Selection</span></div>
<div class="s" style="left:1493px;top:330px;letter-spacing:-0.226px;"><span>Clear Selection</span></div>
<div style="left:1307px;top:350px;width:354px;height:319px;background:#fff;border:1px solid #9f9f9f;"></div>
<div style="left:1305px;top:669px;width:1px;height:34px;background:#b9b9b9;"></div>
<div style="left:1661px;top:669px;width:1px;height:34px;background:#b9b9b9;"></div>
<div style="left:1308px;top:351px;width:352px;height:22px;background:#f0f0f0;"></div>
<div style="left:1308px;top:373px;width:352px;height:1px;background:#9f9f9f;"></div>
<div style="left:1329px;top:351px;width:1px;height:22px;background:#b9b9b9;"></div>
<div style="left:1521px;top:351px;width:1px;height:22px;background:#b9b9b9;"></div>
<div style="left:1599px;top:351px;width:1px;height:22px;background:#b9b9b9;"></div>
<div style="left:1629px;top:351px;width:1px;height:22px;background:#b9b9b9;"></div>
<div class="h" style="left:1333px;top:355px;letter-spacing:-0.170px;"><span>Linked Item</span></div>
<div class="h" style="left:1525px;top:355px;letter-spacing:-0.185px;"><span>Description</span></div>
<div class="h" style="left:1603px;top:355px;letter-spacing:-0.525px;"><span>Ed...</span></div>
<div class="h" style="left:1633px;top:355px;letter-spacing:-0.525px;"><span>Ed...</span></div>
<div style="left:1366px;top:394px;width:295px;height:1px;background:#c9c9c9;"></div>
<div class="t" style="left:1371px;top:377px;letter-spacing:-0.318px;"><span>2N IP Verso</span></div>
<svg style="left:1351px;top:377px;" width="13" height="16" viewBox="0 0 13 16"><path d="M2 2l10 1.500v12L2 14z" fill="#d5d8dc"/><rect x=".5" y=".5" width="10.500" height="13" fill="#f6f7f8" stroke="#b9bcc0" stroke-width=".8"/><path d="M.5 9l10.500-4v8.500H.5z" fill="#dfe2e6" opacity=".7"/><path d="M3 2.500h5.600v2H6.900v6.500H4.700V4.500H3z" fill="#4a4a4a"/></svg>
<svg style="left:1606px;top:376px;" width="16" height="16" viewBox="0 0 16 16"><path d="M1.500 9V5c0-5.500 8-5.500 8 0v2.500" fill="none" stroke="#8a8a8a" stroke-width="1.200"/><rect x="6.500" y="8.500" width="9" height="7" rx="1.200" fill="#8f8f8f"/><rect x="10.300" y="10.500" width="1.500" height="3" fill="#ececec"/></svg>
<svg style="left:1636px;top:379px;" width="16" height="10" viewBox="0 0 16 10"><path d="M.5 5C4-.5 12-.5 15.500 5 12 10.500 4 10.500.5 5z" fill="#fff" stroke="#3a3f8a" stroke-width="1"/><path d="M.8 4C4-1 12-1 15.200 4" fill="none" stroke="#b0703a" stroke-width="1.400"/><circle cx="8" cy="5.200" r="3.200" fill="#5a86c8" stroke="#2a3f7a" stroke-width=".7"/><circle cx="8" cy="5.200" r="1.400" fill="#111"/></svg>
<div style="left:1366px;top:415px;width:295px;height:1px;background:#c9c9c9;"></div>
<div class="t" style="left:1371px;top:398px;letter-spacing:-0.318px;"><span>2N IP Verso</span></div>
<svg style="left:1349px;top:398px;" width="15" height="15" viewBox="0 0 15 15"><circle cx="7.500" cy="7.500" r="7" fill="#d8dde8" stroke="#6a7288" stroke-width=".9"/><circle cx="7.500" cy="7.500" r="5.300" fill="url(#gBlueBall)"/><text x="7.500" y="11" font-family="Liberation Sans,sans-serif" font-size="9" font-weight="bold" fill="#fff" text-anchor="middle">?</text></svg>
<svg style="left:1606px;top:397px;" width="16" height="16" viewBox="0 0 16 16"><path d="M1.500 9V5c0-5.500 8-5.500 8 0v2.500" fill="none" stroke="#8a8a8a" stroke-width="1.200"/><rect x="6.500" y="8.500" width="9" height="7" rx="1.200" fill="#8f8f8f"/><rect x="10.300" y="10.500" width="1.500" height="3" fill="#ececec"/></svg>
<svg style="left:1636px;top:400px;" width="16" height="10" viewBox="0 0 16 10"><path d="M.5 5C4-.5 12-.5 15.500 5 12 10.500 4 10.500.5 5z" fill="#fff" stroke="#3a3f8a" stroke-width="1"/><path d="M.8 4C4-1 12-1 15.200 4" fill="none" stroke="#b0703a" stroke-width="1.400"/><circle cx="8" cy="5.200" r="3.200" fill="#5a86c8" stroke="#2a3f7a" stroke-width=".7"/><circle cx="8" cy="5.200" r="1.400" fill="#111"/></svg>
<div style="left:1366px;top:436px;width:295px;height:1px;background:#c9c9c9;"></div>
<div class="t" style="left:1371px;top:419px;letter-spacing:-0.318px;"><span>2N IP Verso</span></div>
<svg style="left:1351px;top:419px;" width="13" height="16" viewBox="0 0 13 16"><path d="M2 2l10 1.500v12L2 14z" fill="#d5d8dc"/><rect x=".5" y=".5" width="10.500" height="13" fill="#f6f7f8" stroke="#b9bcc0" stroke-width=".8"/><path d="M.5 9l10.500-4v8.500H.5z" fill="#dfe2e6" opacity=".7"/><path d="M3 2.500h5.600v2H6.900v6.500H4.700V4.500H3z" fill="#4a4a4a"/></svg>
<svg style="left:1606px;top:418px;" width="16" height="16" viewBox="0 0 16 16"><path d="M1.500 9V5c0-5.500 8-5.500 8 0v2.500" fill="none" stroke="#8a8a8a" stroke-width="1.200"/><rect x="6.500" y="8.500" width="9" height="7" rx="1.200" fill="#8f8f8f"/><rect x="10.300" y="10.500" width="1.500" height="3" fill="#ececec"/></svg>
<svg style="left:1636px;top:421px;" width="16" height="10" viewBox="0 0 16 10"><path d="M.5 5C4-.5 12-.5 15.500 5 12 10.500 4 10.500.5 5z" fill="#fff" stroke="#3a3f8a" stroke-width="1"/><path d="M.8 4C4-1 12-1 15.200 4" fill="none" stroke="#b0703a" stroke-width="1.400"/><circle cx="8" cy="5.200" r="3.200" fill="#5a86c8" stroke="#2a3f7a" stroke-width=".7"/><circle cx="8" cy="5.200" r="1.400" fill="#111"/></svg>
<div style="left:1367px;top:437px;width:294px;height:21px;background:#d0d0d0;"></div>
<div style="left:1366px;top:457px;width:295px;height:1px;background:#c0c0c0;"></div>
<div class="t" style="left:1371px;top:440px;letter-spacing:-0.318px;"><span>2N IP Verso</span></div>
<svg style="left:1349px;top:440px;" width="15" height="15" viewBox="0 0 15 15"><circle cx="7.500" cy="7.500" r="7" fill="#d8dde8" stroke="#6a7288" stroke-width=".9"/><circle cx="7.500" cy="7.500" r="5.300" fill="url(#gBlueBall)"/><text x="7.500" y="11" font-family="Liberation Sans,sans-serif" font-size="9" font-weight="bold" fill="#fff" text-anchor="middle">?</text></svg>
<svg style="left:1606px;top:439px;" width="16" height="16" viewBox="0 0 16 16"><path d="M1.500 9V5c0-5.500 8-5.500 8 0v2.500" fill="none" stroke="#8a8a8a" stroke-width="1.200"/><rect x="6.500" y="8.500" width="9" height="7" rx="1.200" fill="#8f8f8f"/><rect x="10.300" y="10.500" width="1.500" height="3" fill="#ececec"/></svg>
<svg style="left:1636px;top:442px;" width="16" height="10" viewBox="0 0 16 10"><path d="M.5 5C4-.5 12-.5 15.500 5 12 10.500 4 10.500.5 5z" fill="#fff" stroke="#3a3f8a" stroke-width="1"/><path d="M.8 4C4-1 12-1 15.200 4" fill="none" stroke="#b0703a" stroke-width="1.400"/><circle cx="8" cy="5.200" r="3.200" fill="#5a86c8" stroke="#2a3f7a" stroke-width=".7"/><circle cx="8" cy="5.200" r="1.400" fill="#111"/></svg>
<div style="left:1329px;top:374px;width:1px;height:84px;background:#c9c9c9;"></div>
<div style="left:1366px;top:374px;width:1px;height:84px;background:#c9c9c9;"></div>
<div style="left:1521px;top:374px;width:1px;height:84px;background:#c9c9c9;"></div>
<div style="left:1599px;top:374px;width:1px;height:84px;background:#c9c9c9;"></div>
<div style="left:1629px;top:374px;width:1px;height:84px;background:#c9c9c9;"></div>
<svg style="left:1315px;top:380px;" width="5" height="8" viewBox="0 0 5 8"><path d="M0 0v8l4.500-4z" fill="#555"/></svg>
<svg style="left:1479px;top:672px;" width="8" height="5" viewBox="0 0 8 5"><path d="M0 0h7L3.500 4z" fill="#666"/></svg>
<div style="left:1305px;top:702px;width:357px;height:301px;background:#f0f0f0;border:1px solid #9f9f9f;border-width:1px 2px 2px 1px;"></div>
<div style="left:1308px;top:681px;width:75px;height:21px;background:#dedede;border:1px solid #b5b5b5;border-bottom:none;"></div>
<div style="left:1384px;top:681px;width:60px;height:21px;background:#dedede;border:1px solid #b5b5b5;border-bottom:none;"></div>
<div style="left:1444px;top:679px;width:106px;height:24px;background:#f0f0f0;border:1px solid #9f9f9f;border-bottom:none;"></div>
<div class="t" style="left:1313px;top:685px;letter-spacing:-0.033px;"><span>Linked Item/s</span></div>
<div class="t" style="left:1389px;top:685px;letter-spacing:-0.014px;"><span>Properties</span></div>
<div class="t" style="left:1451px;top:684px;letter-spacing:-0.336px;"><span>Actions/Commands</span></div>
<div style="left:1437px;top:676px;width:119px;height:35px;border:5px solid #ed1c24;"></div>
<div style="left:1320px;top:718px;width:14px;height:14px;background:#fff;border:1px solid #ababab;"></div>
<div class="t" style="left:1338px;top:718px;letter-spacing:-0.195px;"><span>Actions and Commands require validation</span></div>
<div style="left:1320px;top:742px;width:14px;height:14px;background:#fff;border:1px solid #ababab;"></div>
<div class="t" style="left:1338px;top:742px;letter-spacing:-0.139px;"><span>Actions and Commands require Operator credentials</span></div>
<div class="t" style="left:1319px;top:763px;letter-spacing:-0.348px;"><span>Additional Commands</span></div>
<svg style="left:1326px;top:784px;" width="14" height="14" viewBox="0 0 14 14"><path d="M5 1h4v4h4v4H9v4H5V9H1V5h4z" fill="#9ccc3a" stroke="#6a9a1c" stroke-width=".9"/></svg>
<div class="s" style="left:1344px;top:783px;letter-spacing:0.214px;"><span>Add</span></div>
<svg style="left:1378px;top:788px;" width="14" height="6" viewBox="0 0 14 6"><rect x=".5" y=".5" width="13" height="4" rx="1" fill="#e8642a" stroke="#b8400f" stroke-width=".7"/></svg>
<div class="s" style="left:1396px;top:783px;letter-spacing:-0.281px;"><span>Remove</span></div>
<div style="left:1319px;top:803px;width:329px;height:123px;background:#fff;border:1px solid #9f9f9f;"></div>
<div style="left:1320px;top:804px;width:327px;height:22px;background:#f0f0f0;"></div>
<div style="left:1320px;top:826px;width:327px;height:1px;background:#9f9f9f;"></div>
<div style="left:1342px;top:804px;width:1px;height:22px;background:#b9b9b9;"></div>
<div style="left:1443px;top:804px;width:1px;height:22px;background:#b9b9b9;"></div>
<div style="left:1544px;top:804px;width:1px;height:22px;background:#b9b9b9;"></div>
<div class="h" style="left:1346px;top:808px;letter-spacing:-0.586px;"><span>Name</span></div>
<div class="h" style="left:1447px;top:808px;letter-spacing:-0.536px;"><span>Command</span></div>
<div class="h" style="left:1548px;top:808px;letter-spacing:-0.159px;"><span>Custom Icon</span></div>
<div style="left:1343px;top:827px;width:304px;height:21px;background:#d0d0d0;"></div>
<div style="left:1444px;top:827px;width:100px;height:21px;background:#cfdcee;"></div>
<div class="t" style="left:1447px;top:830px;letter-spacing:-0.024px;"><span>Invoke a c...</span></div>
<div style="left:1517px;top:837px;width:2px;height:2px;background:#444;"></div>
<div style="left:1520px;top:837px;width:2px;height:2px;background:#444;"></div>
<div style="left:1523px;top:837px;width:2px;height:2px;background:#444;"></div>
<svg style="left:1533px;top:834px;" width="6" height="6" viewBox="0 0 6 6"><path d="M.5.5l5 5M5.500.5l-5 5" stroke="#e0241f" stroke-width="1.400"/></svg>
<div class="t" style="left:1346px;top:830px;letter-spacing:-0.321px;"><span>Unlock Door</span></div>
<svg style="left:1589px;top:832px;" width="14" height="11" viewBox="0 0 14 11"><rect x=".5" y=".5" width="13" height="10" fill="#f4f4f4" stroke="#a9a9a9" stroke-width="1"/><path d="M2 9l3-4 2.500 2.500L9 6l3 3z" fill="#a9a9a9"/><circle cx="10" cy="3.500" r="1.200" fill="#a9a9a9"/></svg>
<div style="left:1342px;top:847px;width:305px;height:1px;background:#c9c9c9;"></div>
<div class="t" style="left:1447px;top:851px;letter-spacing:-0.111px;"><span>Invoke a comman...</span></div>
<div class="t" style="left:1346px;top:851px;letter-spacing:-0.017px;"><span>Audio Test</span></div>
<svg style="left:1589px;top:853px;" width="14" height="11" viewBox="0 0 14 11"><rect x=".5" y=".5" width="13" height="10" fill="#f4f4f4" stroke="#a9a9a9" stroke-width="1"/><path d="M2 9l3-4 2.500 2.500L9 6l3 3z" fill="#a9a9a9"/><circle cx="10" cy="3.500" r="1.200" fill="#a9a9a9"/></svg>
<div style="left:1342px;top:868px;width:305px;height:1px;background:#c9c9c9;"></div>
<div class="t" style="left:1447px;top:872px;letter-spacing:-0.111px;"><span>Invoke a comman...</span></div>
<div class="t" style="left:1346px;top:872px;letter-spacing:-0.014px;"><span>Restart System</span></div>
<svg style="left:1589px;top:874px;" width="14" height="11" viewBox="0 0 14 11"><rect x=".5" y=".5" width="13" height="10" fill="#f4f4f4" stroke="#a9a9a9" stroke-width="1"/><path d="M2 9l3-4 2.500 2.500L9 6l3 3z" fill="#a9a9a9"/><circle cx="10" cy="3.500" r="1.200" fill="#a9a9a9"/></svg>
<div style="left:1342px;top:889px;width:305px;height:1px;background:#c9c9c9;"></div>
<div class="t" style="left:1447px;top:893px;letter-spacing:-0.111px;"><span>Invoke a comman...</span></div>
<div class="t" style="left:1346px;top:893px;letter-spacing:-0.216px;"><span>Call2</span></div>
<svg style="left:1589px;top:895px;" width="14" height="11" viewBox="0 0 14 11"><rect x=".5" y=".5" width="13" height="10" fill="#f4f4f4" stroke="#a9a9a9" stroke-width="1"/><path d="M2 9l3-4 2.500 2.500L9 6l3 3z" fill="#a9a9a9"/><circle cx="10" cy="3.500" r="1.200" fill="#a9a9a9"/></svg>
<div style="left:1342px;top:910px;width:305px;height:1px;background:#c9c9c9;"></div>
<div style="left:1342px;top:827px;width:1px;height:84px;background:#c9c9c9;"></div>
<div style="left:1443px;top:827px;width:1px;height:84px;background:#c9c9c9;"></div>
<div style="left:1544px;top:827px;width:1px;height:84px;background:#c9c9c9;"></div>
<svg style="left:1326px;top:831px;" width="10" height="10" viewBox="0 0 10 10"><path d="M1 9l1-3 5.500-5.500 2 2L4 8z" fill="#3a5fc0" stroke="#1a3a88" stroke-width=".5"/></svg>
<div style="left:1312px;top:772px;width:66px;height:38px;border:5px solid #ed1c24;"></div>
<div style="left:1320px;top:933px;width:14px;height:14px;background:#fff;border:1px solid #ababab;"></div>
<div class="t" style="left:1337px;top:933px;letter-spacing:-0.274px;"><span>Enable single click actions</span></div>
<div class="t" style="left:1319px;top:954px;color:#7a7a7a;letter-spacing:-0.130px;"><span>Action to perform on single click</span></div>
<div style="left:1319px;top:970px;width:329px;height:20px;background:#f0f0f0;border:1px solid #adadad;"></div>
<svg style="left:1636px;top:978px;" width="7" height="4" viewBox="0 0 7 4"><path d="M0 0h7L3.500 3.500z" fill="#bdbdbd"/></svg>
</div>
</body></html>
